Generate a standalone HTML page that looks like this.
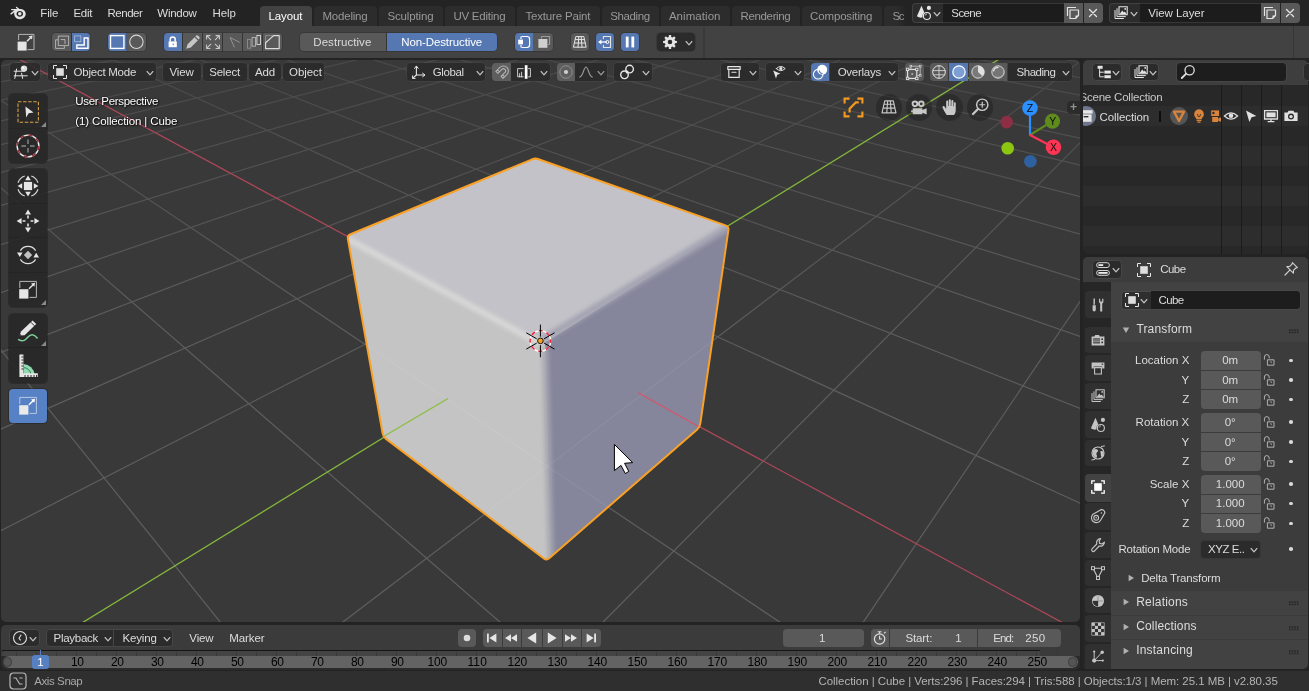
<!DOCTYPE html>
<html><head><meta charset="utf-8"><title>Blender</title>
<style>
html,body{margin:0;padding:0}
body{width:1309px;height:691px;overflow:hidden;position:relative;background:#232323;font-family:"Liberation Sans",sans-serif;font-size:11.5px;color:#e6e6e6}
.t{position:absolute;white-space:pre;line-height:14px;display:block}
.r{position:absolute;box-sizing:border-box}
.i{position:absolute;overflow:visible}
.sh{text-shadow:0 1px 2px rgba(0,0,0,.9),0 0 2px rgba(0,0,0,.8)}
</style></head><body>
<svg class="i" style="left:0;top:58px" width="1084" height="567" viewBox="0 58 1084 567">
<defs>
<clipPath id="vpc"><rect x="1" y="60" width="1079" height="562" rx="5" ry="5"/></clipPath>
<clipPath id="cubec"><path d="M532.1 159.3 Q535.3 158.0 538.6 159.2 L725.6 225.4 Q728.9 226.6 728.4 230.1 L700.3 423.7 Q699.8 427.2 697.2 429.5 L549.2 558.3 Q546.6 560.6 543.8 558.5 L386.0 438.9 Q383.2 436.8 382.6 433.4 L347.9 239.0 Q347.3 235.6 350.5 234.3 Z"/></clipPath>
<linearGradient id="fade" x1="0" y1="60" x2="0" y2="622" gradientUnits="userSpaceOnUse">
<stop offset="0" stop-color="#fff" stop-opacity=".42"/><stop offset=".18" stop-color="#fff" stop-opacity=".62"/><stop offset=".45" stop-color="#fff" stop-opacity=".9"/><stop offset="1" stop-color="#fff" stop-opacity="1"/></linearGradient>
<mask id="fm" maskUnits="userSpaceOnUse" x="0" y="58" width="1084" height="567"><rect x="0" y="58" width="1084" height="567" fill="url(#fade)"/></mask>
<filter id="b3" x="-10%" y="-10%" width="120%" height="120%"><feGaussianBlur stdDeviation="3"/></filter>
<filter id="b2" x="-10%" y="-10%" width="120%" height="120%"><feGaussianBlur stdDeviation="2.2"/></filter>
<filter id="b1" x="-10%" y="-10%" width="120%" height="120%"><feGaussianBlur stdDeviation="1.2"/></filter>
</defs>
<rect x="1" y="60" width="1079" height="562" rx="5" ry="5" fill="#393939"/>
<g clip-path="url(#vpc)">
<g stroke="#606060" stroke-width="1.2" mask="url(#fm)" fill="none">
<line x1="-6129.8" y1="479.9" x2="525.2" y2="-113.3"/>
<line x1="-6129.8" y1="479.9" x2="-91168.5" y2="10524.8"/>
<line x1="-6877.6" y1="568.2" x2="538.6" y2="-112.2"/>
<line x1="-5292.8" y1="405.3" x2="-87488.0" y2="10524.8"/>
<line x1="-7851.4" y1="683.3" x2="552.3" y2="-111.1"/>
<line x1="-4623.0" y1="345.6" x2="-83807.6" y2="10524.8"/>
<line x1="-9172.1" y1="839.3" x2="566.4" y2="-110.0"/>
<line x1="-4074.8" y1="296.7" x2="-80127.1" y2="10524.8"/>
<line x1="-11065.4" y1="1062.9" x2="580.9" y2="-108.8"/>
<line x1="-3617.9" y1="256.0" x2="-76446.7" y2="10524.8"/>
<line x1="-14006.4" y1="1410.3" x2="595.8" y2="-107.5"/>
<line x1="-3231.2" y1="221.5" x2="-72766.2" y2="10524.8"/>
<line x1="-19197.4" y1="2023.5" x2="611.2" y2="-106.3"/>
<line x1="-2899.7" y1="192.0" x2="-69085.8" y2="10524.8"/>
<line x1="-30820.7" y1="3396.4" x2="627.1" y2="-105.0"/>
<line x1="-2612.4" y1="166.4" x2="-65405.3" y2="10524.8"/>
<line x1="-80299.8" y1="9241.0" x2="643.4" y2="-103.6"/>
<line x1="-2360.9" y1="143.9" x2="-61724.9" y2="10524.8"/>
<line x1="-87996.8" y1="10524.8" x2="660.2" y2="-102.2"/>
<line x1="-2139.1" y1="124.2" x2="-58044.4" y2="10524.8"/>
<line x1="-84573.2" y1="10524.8" x2="677.6" y2="-100.8"/>
<line x1="-1941.8" y1="106.6" x2="-54364.0" y2="10524.8"/>
<line x1="-81149.6" y1="10524.8" x2="695.5" y2="-99.3"/>
<line x1="-1765.3" y1="90.8" x2="-50683.5" y2="10524.8"/>
<line x1="-77726.0" y1="10524.8" x2="714.1" y2="-97.8"/>
<line x1="-1606.4" y1="76.7" x2="-47003.1" y2="10524.8"/>
<line x1="-74302.4" y1="10524.8" x2="733.2" y2="-96.2"/>
<line x1="-1462.7" y1="63.9" x2="-43322.6" y2="10524.8"/>
<line x1="-70878.8" y1="10524.8" x2="753.0" y2="-94.6"/>
<line x1="-1332.0" y1="52.2" x2="-39642.1" y2="10524.8"/>
<line x1="-67455.3" y1="10524.8" x2="773.5" y2="-92.9"/>
<line x1="-1212.7" y1="41.6" x2="-35961.7" y2="10524.8"/>
<line x1="-64031.7" y1="10524.8" x2="794.6" y2="-91.1"/>
<line x1="-1103.3" y1="31.8" x2="-32281.2" y2="10524.8"/>
<line x1="-60608.1" y1="10524.8" x2="816.6" y2="-89.3"/>
<line x1="-1002.7" y1="22.9" x2="-28600.8" y2="10524.8"/>
<line x1="-57184.5" y1="10524.8" x2="839.3" y2="-87.5"/>
<line x1="-909.8" y1="14.6" x2="-24920.3" y2="10524.8"/>
<line x1="-53760.9" y1="10524.8" x2="862.9" y2="-85.5"/>
<line x1="-823.7" y1="6.9" x2="-21239.9" y2="10524.8"/>
<line x1="-50337.3" y1="10524.8" x2="887.4" y2="-83.5"/>
<line x1="-743.9" y1="-0.2" x2="-17559.4" y2="10524.8"/>
<line x1="-46913.8" y1="10524.8" x2="912.8" y2="-81.4"/>
<line x1="-669.5" y1="-6.8" x2="-13879.0" y2="10524.8"/>
<line x1="-43490.2" y1="10524.8" x2="939.2" y2="-79.2"/>
<line x1="-600.1" y1="-13.0" x2="-10198.5" y2="10524.8"/>
<line x1="-40066.6" y1="10524.8" x2="966.6" y2="-77.0"/>
<line x1="-535.1" y1="-18.8" x2="-6518.1" y2="10524.8"/>
<line x1="-36643.0" y1="10524.8" x2="995.2" y2="-74.6"/>
<line x1="-474.2" y1="-24.2" x2="-2837.6" y2="10524.8"/>
<line x1="-33219.4" y1="10524.8" x2="1024.9" y2="-72.2"/>
<line x1="-417.0" y1="-29.3" x2="842.8" y2="10524.8"/>
<line x1="-29795.8" y1="10524.8" x2="1055.9" y2="-69.6"/>
<line x1="-363.2" y1="-34.1" x2="4523.3" y2="10524.8"/>
<line x1="-26372.3" y1="10524.8" x2="1088.3" y2="-67.0"/>
<line x1="-312.4" y1="-38.7" x2="8203.7" y2="10524.8"/>
<line x1="-22948.7" y1="10524.8" x2="1122.1" y2="-64.2"/>
<line x1="-264.5" y1="-42.9" x2="11884.2" y2="10524.8"/>
<line x1="-19525.1" y1="10524.8" x2="1157.4" y2="-61.3"/>
<line x1="-219.2" y1="-47.0" x2="15564.7" y2="10524.8"/>
<line x1="-12677.9" y1="10524.8" x2="1233.1" y2="-55.0"/>
<line x1="-135.4" y1="-54.4" x2="22925.6" y2="10524.8"/>
<line x1="-9254.4" y1="10524.8" x2="1273.7" y2="-51.7"/>
<line x1="-96.7" y1="-57.9" x2="26606.0" y2="10524.8"/>
<line x1="-5830.8" y1="10524.8" x2="1316.4" y2="-48.2"/>
<line x1="-59.9" y1="-61.2" x2="30286.5" y2="10524.8"/>
<line x1="-2407.2" y1="10524.8" x2="1361.2" y2="-44.5"/>
<line x1="-24.8" y1="-64.3" x2="33966.9" y2="10524.8"/>
<line x1="1016.4" y1="10524.8" x2="1408.4" y2="-40.6"/>
<line x1="8.7" y1="-67.3" x2="37647.4" y2="10524.8"/>
<line x1="4440.0" y1="10524.8" x2="1458.1" y2="-36.5"/>
<line x1="40.6" y1="-70.1" x2="41327.8" y2="10524.8"/>
<line x1="7863.6" y1="10524.8" x2="1510.5" y2="-32.2"/>
<line x1="71.1" y1="-72.9" x2="45008.3" y2="10524.8"/>
<line x1="11287.1" y1="10524.8" x2="1566.0" y2="-27.6"/>
<line x1="100.3" y1="-75.5" x2="48688.7" y2="10524.8"/>
<line x1="14710.7" y1="10524.8" x2="1624.7" y2="-22.8"/>
<line x1="128.2" y1="-78.0" x2="52369.2" y2="10524.8"/>
<line x1="18134.3" y1="10524.8" x2="1686.9" y2="-17.6"/>
<line x1="155.0" y1="-80.3" x2="56049.6" y2="10524.8"/>
<line x1="21557.9" y1="10524.8" x2="1753.0" y2="-12.2"/>
<line x1="180.7" y1="-82.6" x2="59730.1" y2="10524.8"/>
<line x1="24981.5" y1="10524.8" x2="1823.4" y2="-6.4"/>
<line x1="205.4" y1="-84.8" x2="63410.5" y2="10524.8"/>
<line x1="28405.1" y1="10524.8" x2="1898.4" y2="-0.2"/>
<line x1="229.0" y1="-86.9" x2="67091.0" y2="10524.8"/>
<line x1="31828.6" y1="10524.8" x2="1978.6" y2="6.4"/>
<line x1="251.8" y1="-89.0" x2="70771.5" y2="10524.8"/>
<line x1="35252.2" y1="10524.8" x2="2064.5" y2="13.5"/>
<line x1="273.7" y1="-90.9" x2="74451.9" y2="10524.8"/>
<line x1="38675.8" y1="10524.8" x2="2156.8" y2="21.1"/>
<line x1="294.9" y1="-92.8" x2="78132.4" y2="10524.8"/>
<line x1="42099.4" y1="10524.8" x2="2256.1" y2="29.2"/>
<line x1="315.2" y1="-94.6" x2="81812.8" y2="10524.8"/>
<line x1="45523.0" y1="10524.8" x2="2363.3" y2="38.1"/>
<line x1="334.8" y1="-96.4" x2="85493.3" y2="10524.8"/>
<line x1="48946.6" y1="10524.8" x2="2479.4" y2="47.6"/>
<line x1="353.7" y1="-98.1" x2="37095.2" y2="4296.2"/>
<line x1="52370.1" y1="10524.8" x2="2605.5" y2="58.0"/>
<line x1="372.0" y1="-99.7" x2="20879.9" y2="2256.3"/>
<line x1="55793.7" y1="10524.8" x2="2743.1" y2="69.4"/>
<line x1="389.7" y1="-101.3" x2="14797.7" y2="1491.1"/>
<line x1="59217.3" y1="10524.8" x2="2893.6" y2="81.8"/>
<line x1="406.7" y1="-102.8" x2="11611.5" y2="1090.3"/>
<line x1="62640.9" y1="10524.8" x2="3059.2" y2="95.4"/>
<line x1="423.3" y1="-104.3" x2="9650.6" y2="843.6"/>
<line x1="66064.5" y1="10524.8" x2="3242.1" y2="110.5"/>
<line x1="439.2" y1="-105.7" x2="8322.2" y2="676.5"/>
<line x1="69488.0" y1="10524.8" x2="3445.1" y2="127.2"/>
<line x1="454.7" y1="-107.1" x2="7362.8" y2="555.8"/>
<line x1="72911.6" y1="10524.8" x2="3671.9" y2="145.9"/>
<line x1="469.7" y1="-108.4" x2="6637.4" y2="464.5"/>
<line x1="76335.2" y1="10524.8" x2="3926.8" y2="166.9"/>
<line x1="484.2" y1="-109.7" x2="6069.6" y2="393.1"/>
<line x1="79758.8" y1="10524.8" x2="4215.5" y2="190.7"/>
<line x1="498.3" y1="-110.9" x2="5613.2" y2="335.7"/>
<line x1="83182.4" y1="10524.8" x2="4545.0" y2="217.8"/>
<line x1="512.0" y1="-112.2" x2="5238.3" y2="288.5"/>
<line x1="86606.0" y1="10524.8" x2="4924.9" y2="249.1"/>
<line x1="525.2" y1="-113.3" x2="4924.9" y2="249.1"/>
</g>
<line x1="-100.0" y1="-5.2" x2="1200.0" y2="696.9" stroke="#ad475a" stroke-width="1.25"/>
<line x1="-100.0" y1="734.8" x2="1200.0" y2="-64.3" stroke="#84b73c" stroke-width="1.3"/>
<g clip-path="url(#cubec)">
<polygon points="535.3,158.0 728.9,226.6 699.8,427.2 546.6,560.6 383.2,436.8 347.3,235.6" fill="#c3c3c3"/>
<polygon points="535.3,158.0 728.9,226.6 540.6,341.0 347.3,235.6" fill="#c3c2c8"/>
<polygon points="347.3,235.6 540.6,341.0 546.6,560.6 383.2,436.8" fill="#c4c4c4"/>
<polygon points="540.6,341.0 545.1,342.5 551.1,557.1 546.6,560.6" fill="#c4c4c4"/>
<polygon points="545.1,342.5 728.9,226.6 699.8,427.2 546.6,560.6 551.1,557.1" fill="#85869b"/>
<g filter="url(#b2)">
<line x1="540.6" y1="341.0" x2="728.9" y2="226.6" stroke="#a3a3b2" stroke-width="7"/>
<line x1="545.1" y1="348.5" x2="551.1" y2="563.1" stroke="#a5a5b0" stroke-width="6"/>
</g>
<g filter="url(#b2)">
<line x1="347.3" y1="238.6" x2="540.6" y2="344.0" stroke="#dadada" stroke-width="6" stroke-opacity=".9"/>
</g>
</g>
<clipPath id="sidec"><polygon points="347.3,235.6 540.6,341.0 728.9,226.6 699.8,427.2 546.6,560.6 383.2,436.8"/></clipPath>
<g clip-path="url(#sidec)" stroke="#fff" stroke-opacity=".09" stroke-width="1" fill="none">
<line x1="-816.6" y1="1503.9" x2="947.1" y2="162.5"/>
<line x1="111.2" y1="174.3" x2="1845.6" y2="1335.9"/>
</g>
<line x1="383.2" y1="436.8" x2="448.0" y2="398.5" stroke="#8cbd3f" stroke-width="1.3"/>
<line x1="638.3" y1="392.7" x2="699.8" y2="427.2" stroke="#d9536b" stroke-width="1.3"/>
<path d="M532.1 159.3 Q535.3 158.0 538.6 159.2 L725.6 225.4 Q728.9 226.6 728.4 230.1 L700.3 423.7 Q699.8 427.2 697.2 429.5 L549.2 558.3 Q546.6 560.6 543.8 558.5 L386.0 438.9 Q383.2 436.8 382.6 433.4 L347.9 239.0 Q347.3 235.6 350.5 234.3 Z" fill="none" stroke="#f9a126" stroke-width="2" stroke-linejoin="round"/>
<g transform="translate(540.4 340.9)">
<circle r="10.3" fill="none" stroke="#fff" stroke-width="1.3"/>
<circle r="10.3" fill="none" stroke="#f0243a" stroke-width="1.5" stroke-dasharray="4.05 4.04" stroke-dashoffset="2"/>
<line x1="0.0" y1="-4.3" x2="0.0" y2="-16.3" stroke="#000" stroke-width="1"/>
<line x1="3.7" y1="-2.1" x2="14.1" y2="-8.1" stroke="#000" stroke-width="1"/>
<line x1="-3.7" y1="-2.1" x2="-14.1" y2="-8.1" stroke="#000" stroke-width="1"/>
<line x1="-3.7" y1="2.2" x2="-14.1" y2="8.2" stroke="#000" stroke-width="1"/>
<line x1="-0.0" y1="4.3" x2="-0.0" y2="16.3" stroke="#000" stroke-width="1"/>
<line x1="3.7" y1="2.2" x2="14.1" y2="8.2" stroke="#000" stroke-width="1"/>
<circle r="2.8" fill="#f9a126" stroke="#1a1a1a" stroke-width="1"/>
</g>
</g>
<path transform="translate(614.4 444.4)" d="M0 0 L0 26.2 L6.6 21 L10.9 29.2 L14.4 27 L10.2 18.9 L18.3 18.2 Z" fill="#fff" stroke="#000" stroke-width="1" stroke-linejoin="miter"/>
</svg>
<div id="ui" style="position:absolute;left:0;top:0;width:1309px;height:691px;will-change:transform">
<div class="r" style="left:0.0px;top:0.0px;width:1309.0px;height:26.0px;background:#232323;"></div>
<svg class="i" style="left:9.6px;top:4.9px;" width="16" height="16" viewBox="0 0 16 14"><path d="M9.6 3.0 L6.9 .9 C6.3 .4 5.4 1.4 6.1 1.9 L7.4 2.9 L1.7 2.9 C.8 2.9 .8 4.2 1.7 4.2 L4.4 4.2 L.6 7.2 C-.1 7.8 .7 8.9 1.4 8.4 L4.3 6.2 C3.5 9.8 6 13.2 9.8 13.2 C13.1 13.2 15.7 10.8 15.7 7.7 C15.7 4.6 12.8 2.8 9.6 3.0 Z M9.8 5.0 C11.6 5.0 13.1 6.2 13.1 7.8 C13.1 9.4 11.6 10.7 9.8 10.7 C8 10.7 6.5 9.4 6.5 7.8 C6.5 6.2 8 5.0 9.8 5.0 Z" fill="#e4e4e4" fill-rule="evenodd"/><circle cx="9.8" cy="7.8" r="1.8" fill="#e4e4e4"/></svg>
<span class="t" style="left:40.3px;top:6.0px;font-size:11.50px;color:#dcdcdc;letter-spacing:-0.16px;">File</span>
<span class="t" style="left:73.5px;top:6.0px;font-size:11.50px;color:#dcdcdc;letter-spacing:-0.33px;">Edit</span>
<span class="t" style="left:107.4px;top:6.0px;font-size:11.50px;color:#dcdcdc;letter-spacing:-0.45px;">Render</span>
<span class="t" style="left:157.3px;top:6.0px;font-size:11.50px;color:#dcdcdc;letter-spacing:-0.27px;">Window</span>
<span class="t" style="left:212.5px;top:6.0px;font-size:11.50px;color:#dcdcdc;letter-spacing:-0.11px;">Help</span>
<div class="r" style="left:260.2px;top:6.0px;width:51.9px;height:20.0px;background:#424242;border-radius:4px 4px 0 0;"></div>
<span class="t" style="left:268.4px;top:9.2px;font-size:11.50px;color:#ffffff;letter-spacing:-0.10px;">Layout</span>
<div class="r" style="left:314.0px;top:6.0px;width:62.9px;height:20.0px;background:#2c2c2c;border-radius:4px 4px 0 0;"></div>
<span class="t" style="left:322.5px;top:9.2px;font-size:11.50px;color:#989898;letter-spacing:-0.22px;">Modeling</span>
<div class="r" style="left:378.6px;top:6.0px;width:64.8px;height:20.0px;background:#2c2c2c;border-radius:4px 4px 0 0;"></div>
<span class="t" style="left:387.5px;top:9.2px;font-size:11.50px;color:#989898;letter-spacing:-0.15px;">Sculpting</span>
<div class="r" style="left:444.9px;top:6.0px;width:70.6px;height:20.0px;background:#2c2c2c;border-radius:4px 4px 0 0;"></div>
<span class="t" style="left:453.4px;top:9.2px;font-size:11.50px;color:#989898;letter-spacing:-0.23px;">UV Editing</span>
<div class="r" style="left:517.2px;top:6.0px;width:82.8px;height:20.0px;background:#2c2c2c;border-radius:4px 4px 0 0;"></div>
<span class="t" style="left:525.5px;top:9.2px;font-size:11.50px;color:#989898;letter-spacing:-0.18px;">Texture Paint</span>
<div class="r" style="left:601.8px;top:6.0px;width:57.5px;height:20.0px;background:#2c2c2c;border-radius:4px 4px 0 0;"></div>
<span class="t" style="left:610.2px;top:9.2px;font-size:11.50px;color:#989898;letter-spacing:-0.39px;">Shading</span>
<div class="r" style="left:661.1px;top:6.0px;width:68.8px;height:20.0px;background:#2c2c2c;border-radius:4px 4px 0 0;"></div>
<span class="t" style="left:668.9px;top:9.2px;font-size:11.50px;color:#989898;letter-spacing:0.06px;">Animation</span>
<div class="r" style="left:731.9px;top:6.0px;width:68.1px;height:20.0px;background:#2c2c2c;border-radius:4px 4px 0 0;"></div>
<span class="t" style="left:740.5px;top:9.2px;font-size:11.50px;color:#989898;letter-spacing:-0.35px;">Rendering</span>
<div class="r" style="left:802.3px;top:6.0px;width:79.6px;height:20.0px;background:#2c2c2c;border-radius:4px 4px 0 0;"></div>
<span class="t" style="left:810.1px;top:9.2px;font-size:11.50px;color:#989898;letter-spacing:-0.16px;">Compositing</span>
<div class="r" style="left:884.2px;top:6.0px;width:21.8px;height:20.0px;background:linear-gradient(90deg,#2c2c2c 60%,rgba(44,44,44,0));border-radius:4px 0 0 0;"></div>
<span class="t" style="left:892.5px;top:9.2px;font-size:11.50px;color:#989898;letter-spacing:-1.31px;width:11.5px;overflow:hidden;">Sc</span>
<div class="r" style="left:912.0px;top:3.0px;width:31.4px;height:20.0px;background:#2c2c2c;border-radius:4px 0 0 4px;border:1px solid #414141;border-right:none;"></div>
<svg class="i" style="left:916.0px;top:5.0px;" width="16" height="16" viewBox="0 0 16 16"><path d="M5.5 .8 L9.6 10.6 Q5.4 14.4 .9 11.3 Z" fill="currentColor" /><circle cx="10.9" cy="11" r="4.4" fill="#2c2c2c"/><circle cx="10.9" cy="11" r="3.5" fill="none" stroke="currentColor" stroke-width="1.1"/><circle cx="12.9" cy="2.9" r="2.1" fill="currentColor"/><path d="M9.2 10.2 A2 2 0 0 1 10.6 8.9" fill="none" stroke="currentColor" stroke-width="0.8" stroke-linecap="round" stroke-linejoin="round" /></svg>
<svg class="i" style="left:931.4px;top:9.8px" width="12" height="8" viewBox="-6 -4 12 8"><path d="M-2.9 -1.5 L0 1.8 L2.9 -1.5" fill="none" stroke="#c2c2c2" stroke-width="1.15" stroke-linecap="round" stroke-linejoin="round"/></svg>
<div class="r" style="left:943.4px;top:3.0px;width:120.2px;height:20.0px;background:#1c1c1c;border-radius:0px;border-top:1px solid #363636;border-bottom:1px solid #363636;"></div>
<span class="t" style="left:951.3px;top:5.8px;font-size:11.50px;color:#dcdcdc;letter-spacing:-0.58px;">Scene</span>
<div class="r" style="left:1063.6px;top:3.0px;width:19.4px;height:20.0px;background:#595959;border-radius:0px;"></div>
<svg class="i" style="left:1065.3px;top:5.0px;" width="16" height="16" viewBox="0 0 16 16"><path d="M2.5 10.5 V2.5 H10.5" fill="none" stroke="currentColor" stroke-width="1.2" stroke-linecap="round" stroke-linejoin="round" /><path d="M5 5 H13.5 V10.5 L10.5 13.5 H5 Z" fill="#595959" stroke="currentColor" stroke-width="1.2" stroke-linejoin="round"/><path d="M13.5 10.5 H10.5 V13.5 Z" fill="currentColor" /></svg>
<div class="r" style="left:1083.8px;top:3.0px;width:19.2px;height:20.0px;background:#595959;border-radius:0 4px 4px 0;"></div>
<svg class="i" style="left:1085.4px;top:5.0px;" width="16" height="16" viewBox="0 0 16 16"><path d="M4.5 4.5 L11.5 11.5 M11.5 4.5 L4.5 11.5" fill="none" stroke="currentColor" stroke-width="1.3" stroke-linecap="round" stroke-linejoin="round" /></svg>
<div class="r" style="left:1109.0px;top:3.0px;width:31.4px;height:20.0px;background:#2c2c2c;border-radius:4px 0 0 4px;border:1px solid #414141;border-right:none;"></div>
<svg class="i" style="left:1113.0px;top:5.0px;" width="16" height="16" viewBox="0 0 16 16"><path d="M2 5.5 V13.5 H10.5 M4 3.7 V11.6 H12.4" fill="none" stroke="currentColor" stroke-width="1" stroke-linecap="round" stroke-linejoin="round" /><path d="M6 1.8 H14.2 V9.8 H6 Z" fill="none" stroke="currentColor" stroke-width="1.1"/><path d="M6.6 9.2 L9.2 5.4 L10.8 7.6 L11.8 6.4 L13.6 9.2 Z" fill="currentColor" /><circle cx="12.2" cy="3.9" r=".9" fill="currentColor"/></svg>
<svg class="i" style="left:1128.4px;top:9.8px" width="12" height="8" viewBox="-6 -4 12 8"><path d="M-2.9 -1.5 L0 1.8 L2.9 -1.5" fill="none" stroke="#c2c2c2" stroke-width="1.15" stroke-linecap="round" stroke-linejoin="round"/></svg>
<div class="r" style="left:1140.4px;top:3.0px;width:120.2px;height:20.0px;background:#1c1c1c;border-radius:0px;border-top:1px solid #363636;border-bottom:1px solid #363636;"></div>
<span class="t" style="left:1148.3px;top:5.8px;font-size:11.50px;color:#dcdcdc;letter-spacing:-0.05px;">View Layer</span>
<div class="r" style="left:1260.6px;top:3.0px;width:19.4px;height:20.0px;background:#595959;border-radius:0px;"></div>
<svg class="i" style="left:1262.3px;top:5.0px;" width="16" height="16" viewBox="0 0 16 16"><path d="M2.5 10.5 V2.5 H10.5" fill="none" stroke="currentColor" stroke-width="1.2" stroke-linecap="round" stroke-linejoin="round" /><path d="M5 5 H13.5 V10.5 L10.5 13.5 H5 Z" fill="#595959" stroke="currentColor" stroke-width="1.2" stroke-linejoin="round"/><path d="M13.5 10.5 H10.5 V13.5 Z" fill="currentColor" /></svg>
<div class="r" style="left:1280.8px;top:3.0px;width:19.2px;height:20.0px;background:#595959;border-radius:0 4px 4px 0;"></div>
<svg class="i" style="left:1282.4px;top:5.0px;" width="16" height="16" viewBox="0 0 16 16"><path d="M4.5 4.5 L11.5 11.5 M11.5 4.5 L4.5 11.5" fill="none" stroke="currentColor" stroke-width="1.3" stroke-linecap="round" stroke-linejoin="round" /></svg>
<div class="r" style="left:0.0px;top:26.0px;width:1309.0px;height:32.0px;background:#424242;"></div>
<div class="r" style="left:703.2px;top:27.0px;width:1.6px;height:31.0px;background:#3a3a3a;"></div>
<div class="r" style="left:1292.5px;top:26.0px;width:1.0px;height:32.0px;background:#363636;"></div>
<svg class="i" style="left:16.8px;top:33.2px;" width="18" height="18" viewBox="0 0 18 18"><path d="M1.6 7 V1.4 H17 V16.6 H10.4" fill="none" stroke="#b4b4b4" stroke-width="1"/><rect x=".6" y="8.6" width="9" height="9" fill="#e6e6e6"/><path d="M10 8.2 L14 4.2" stroke="#e6e6e6" stroke-width="1.4" fill="none"/><path d="M15.6 2.6 L15 6.6 L11.6 3.2 Z" fill="#e6e6e6"/></svg>
<div class="r" style="left:52.0px;top:32.9px;width:18.8px;height:18.1px;background:#595959;border-radius:4px 0 0 4px;box-shadow:0 0 0 .7px rgba(45,45,45,.55);"></div>
<svg class="i" style="left:53.4px;top:34.0px;" width="16" height="16" viewBox="0 0 16 16"><path d="M4.6 5.8 H2.6 V14.4 H11.4 V12.6" fill="none" stroke="currentColor" stroke-width="1" stroke-linecap="round" stroke-linejoin="round" opacity=".62"/><path d="M5.7 2.1 H15.6 V11.6 H5.7 Z M8 5.6 H12 V9.6" fill="none" stroke="currentColor" stroke-width="1" stroke-linecap="round" stroke-linejoin="round" opacity=".62"/></svg>
<div class="r" style="left:71.5px;top:32.9px;width:18.5px;height:18.1px;background:#5578b2;border-radius:0 4px 4px 0;box-shadow:0 0 0 .7px rgba(45,45,45,.55);"></div>
<svg class="i" style="left:72.8px;top:34.0px;" width="16" height="16" viewBox="0 0 16 16"><rect x="1.6" y="1.9" width="6.2" height="5.8" fill="none" stroke="#d6e0f2" stroke-width=".9" opacity=".6"/><path d="M11.2 4 H15 V14.3 H3.8 V11 H11.2 Z" fill="none" stroke="#fff" stroke-width="1.4" stroke-linejoin="miter"/></svg>
<div class="r" style="left:107.8px;top:32.9px;width:18.8px;height:18.1px;background:#5578b2;border-radius:4px 0 0 4px;box-shadow:0 0 0 .7px rgba(45,45,45,.55);"></div>
<svg class="i" style="left:109.2px;top:34.0px;" width="16" height="16" viewBox="0 0 16 16"><rect x="1.5" y="1.6" width="13.4" height="12.8" fill="none" stroke="#fff" stroke-width="1.4"/></svg>
<div class="r" style="left:127.3px;top:32.9px;width:18.7px;height:18.1px;background:#595959;border-radius:0 4px 4px 0;box-shadow:0 0 0 .7px rgba(45,45,45,.55);"></div>
<svg class="i" style="left:128.7px;top:34.0px;" width="16" height="16" viewBox="0 0 16 16"><circle cx="7.4" cy="7.8" r="6.7" fill="none" stroke="#d6d6d6" stroke-width="1.1"/></svg>
<div class="r" style="left:163.9px;top:32.9px;width:18.3px;height:18.1px;background:#5578b2;border-radius:4px 0 0 4px;box-shadow:0 0 0 .7px rgba(45,45,45,.55);"></div>
<svg class="i" style="left:165.1px;top:34.0px;" width="16" height="16" viewBox="0 0 16 16"><path d="M5.2 7.6 V5.4 A2.5 2.5 0 0 1 10.2 5.4 V7.6" fill="none" stroke="#fff" stroke-width="1.5"/><path d="M3.6 7.4 H11.8 V13.2 H3.6 Z" fill="#fff"/><path d="M7 9.8 H8.8 V11.4 Z" fill="#5578b2"/></svg>
<div class="r" style="left:182.9px;top:32.9px;width:19.4px;height:18.1px;background:#595959;border-radius:0px;box-shadow:0 0 0 .7px rgba(45,45,45,.55);"></div>
<svg class="i" style="left:184.6px;top:34.0px;" width="16" height="16" viewBox="0 0 16 16"><path d="M1.2 14.8 L2.6 10.2 L9.6 3.2 L12.8 6.4 L5.8 13.4 Z M10.4 2.4 L11.2 1.6 Q12.2 .8 13.2 1.8 L14.2 2.8 Q15.2 3.8 14.4 4.8 L13.6 5.6 Z" fill="#c6c6c6"/></svg>
<div class="r" style="left:203.0px;top:32.9px;width:19.2px;height:18.1px;background:#595959;border-radius:0px;box-shadow:0 0 0 .7px rgba(45,45,45,.55);"></div>
<svg class="i" style="left:204.6px;top:34.0px;" width="16" height="16" viewBox="0 0 16 16"><path d="M1.6 5 V1.6 H5 M1.9 1.9 L5.8 5.8 M11 1.6 H14.4 V5 M14.1 1.9 L10.2 5.8 M1.6 11 V14.4 H5 M1.9 14.1 L5.8 10.2 M14.4 11 V14.4 H11 M14.1 14.1 L10.2 10.2" fill="none" stroke="currentColor" stroke-width="1.05" stroke-linecap="round" stroke-linejoin="round" opacity=".8"/></svg>
<div class="r" style="left:222.9px;top:32.9px;width:19.4px;height:18.1px;background:#595959;border-radius:0px;box-shadow:0 0 0 .7px rgba(45,45,45,.55);"></div>
<svg class="i" style="left:224.6px;top:34.0px;" width="16" height="16" viewBox="0 0 16 16"><path d="M9.2 13 L5.2 3.6 L14.4 8.2" fill="none" stroke="currentColor" stroke-width="1" stroke-linecap="round" stroke-linejoin="round" opacity=".4"/></svg>
<div class="r" style="left:243.0px;top:32.9px;width:19.4px;height:18.1px;background:#595959;border-radius:0px;box-shadow:0 0 0 .7px rgba(45,45,45,.55);"></div>
<svg class="i" style="left:244.7px;top:34.0px;" width="16" height="16" viewBox="0 0 16 16"><rect x="2.5" y="5.4" width="3.3" height="8.8" fill="none" stroke="#8e8e8e" stroke-width=".9"/><rect x="7.1" y="3.4" width="3.4" height="8.8" fill="none" stroke="#b8b8b8" stroke-width=".9"/><rect x="11.9" y="1.5" width="3.6" height="9" fill="none" stroke="#dadada" stroke-width=".9"/></svg>
<div class="r" style="left:263.1px;top:32.9px;width:18.6px;height:18.1px;background:#595959;border-radius:0 4px 4px 0;box-shadow:0 0 0 .7px rgba(45,45,45,.55);"></div>
<svg class="i" style="left:264.4px;top:34.0px;" width="16" height="16" viewBox="0 0 16 16"><path d="M1.6 8.8 V14.6 H15.2 V1.6 H9.6 Z" fill="none" stroke="currentColor" stroke-width="1.15" stroke-linecap="round" stroke-linejoin="round" opacity=".92"/><path d="M1.6 8.8 V1.6 H9.6" fill="none" stroke="currentColor" stroke-width="0.9" stroke-linecap="round" stroke-linejoin="round" opacity=".4"/></svg>
<div class="r" style="left:300.0px;top:32.9px;width:86.2px;height:18.1px;background:#595959;border-radius:4px 0 0 4px;box-shadow:0 0 0 .7px rgba(45,45,45,.55);"></div>
<span class="t" style="left:313.3px;top:35.3px;font-size:11.50px;color:#dcdcdc;letter-spacing:0.05px;">Destructive</span>
<div class="r" style="left:386.9px;top:32.9px;width:109.9px;height:18.1px;background:#5578b2;border-radius:0 4px 4px 0;box-shadow:0 0 0 .7px rgba(45,45,45,.55);"></div>
<span class="t" style="left:401.2px;top:35.3px;font-size:11.50px;color:#ffffff;letter-spacing:-0.10px;">Non-Destructive</span>
<div class="r" style="left:514.9px;top:32.9px;width:18.7px;height:18.1px;background:#5578b2;border-radius:4px 0 0 4px;box-shadow:0 0 0 .7px rgba(45,45,45,.55);"></div>
<svg class="i" style="left:516.2px;top:34.0px;" width="16" height="16" viewBox="0 0 16 16"><path d="M5.5 2.5 H11 Q13.6 2.5 13.6 5.2 V10.8 Q13.6 13.5 11 13.5 H5.5" fill="none" stroke="#fff" stroke-width="1.2"/><path d="M5 2.5 V5 M5 11 V13.5" stroke="#fff" stroke-width="1.2"/><rect x="2.2" y="5.6" width="4.8" height="4.8" fill="#fff"/></svg>
<div class="r" style="left:534.3px;top:32.9px;width:18.8px;height:18.1px;background:#595959;border-radius:0 4px 4px 0;box-shadow:0 0 0 .7px rgba(45,45,45,.55);"></div>
<svg class="i" style="left:535.7px;top:34.0px;" width="16" height="16" viewBox="0 0 16 16"><path d="M5.5 2.5 H13.5 V10.5" fill="none" stroke="#9c9c9c" stroke-width="1.2"/><rect x="2.4" y="5" width="9" height="8.8" fill="#cfcfcf"/><path d="M5.5 4.6 V2.5 M11.8 10.5 H13.5" stroke="#9c9c9c" stroke-width="1.2"/></svg>
<div class="r" style="left:571.3px;top:32.9px;width:17.9px;height:18.1px;background:#595959;border-radius:4px;box-shadow:0 0 0 .7px rgba(45,45,45,.55);"></div>
<svg class="i" style="left:572.2px;top:34.0px;" width="16" height="16" viewBox="0 0 16 16"><path d="M4.2 2.6 H11.8 L14.2 13.2 H1.8 Z M6.8 2.6 L6 13.2 M9.2 2.6 L10 13.2 M3.6 5.6 H12.4 M2.8 9 H13.2" fill="none" stroke="currentColor" stroke-width="1" stroke-linecap="round" stroke-linejoin="round" /></svg>
<div class="r" style="left:596.0px;top:32.9px;width:18.2px;height:18.1px;background:#5578b2;border-radius:4px;box-shadow:0 0 0 .7px rgba(45,45,45,.55);"></div>
<svg class="i" style="left:597.1px;top:34.0px;" width="16" height="16" viewBox="0 0 16 16"><path d="M6.4 4.6 V2.5 H13.5 V13.5 H6.4 V11.4" fill="none" stroke="currentColor" stroke-width="1.1" stroke-linecap="round" stroke-linejoin="round" stroke="#fff"/><path d="M1.8 8 H10" stroke="#fff" stroke-width="1.3" fill="none"/><path d="M1.2 8 L4.4 5.4 V10.6 Z" fill="#fff"/><circle cx="10.4" cy="8" r="1.5" fill="none" stroke="#fff" stroke-width="1"/></svg>
<div class="r" style="left:621.2px;top:32.9px;width:17.6px;height:18.1px;background:#5578b2;border-radius:4px;box-shadow:0 0 0 .7px rgba(45,45,45,.55);"></div>
<svg class="i" style="left:622.0px;top:34.0px;" width="16" height="16" viewBox="0 0 16 16"><rect x="3.8" y="2.6" width="2.8" height="10.8" fill="#fff"/><rect x="9.4" y="2.6" width="2.8" height="10.8" fill="#fff"/></svg>
<div class="r" style="left:657.0px;top:32.9px;width:37.7px;height:18.1px;background:#2b2b2b;border-radius:4px;box-shadow:0 0 0 .7px rgba(45,45,45,.55);"></div>
<svg class="i" style="left:661.8px;top:34.2px;" width="16" height="16" viewBox="0 0 16 16"><path d="M14.91 6.88 L14.91 9.12 L13.05 9.24 L12.45 10.70 L13.68 12.10 L12.10 13.68 L10.70 12.45 L9.24 13.05 L9.12 14.91 L6.88 14.91 L6.76 13.05 L5.30 12.45 L3.90 13.68 L2.32 12.10 L3.55 10.70 L2.95 9.24 L1.09 9.12 L1.09 6.88 L2.95 6.76 L3.55 5.30 L2.32 3.90 L3.90 2.32 L5.30 3.55 L6.76 2.95 L6.88 1.09 L9.12 1.09 L9.24 2.95 L10.70 3.55 L12.10 2.32 L13.68 3.90 L12.45 5.30 L13.05 6.76 Z M10.3 8 A2.3 2.3 0 1 0 5.7 8 A2.3 2.3 0 1 0 10.3 8 Z" fill="#e6e6e6" fill-rule="evenodd"/></svg>
<svg class="i" style="left:683.3px;top:39.2px" width="12" height="8" viewBox="-6 -4 12 8"><path d="M-2.9 -1.5 L0 1.8 L2.9 -1.5" fill="none" stroke="#c2c2c2" stroke-width="1.15" stroke-linecap="round" stroke-linejoin="round"/></svg>
<div class="r" style="left:9.9px;top:62.9px;width:30.1px;height:18.4px;background:rgba(40,40,40,.84);border-radius:4px;box-shadow:0 0 0 .7px rgba(85,85,85,.4);"></div>
<svg class="i" style="left:13.3px;top:64.0px;" width="16" height="16" viewBox="0 0 16 16"><path d="M1.2 7.2 H11.5 M1.2 11.8 H14.2 M3.6 5 L1.8 14.4 M8.6 9.2 L9.6 14.4" fill="none" stroke="currentColor" stroke-width="1" stroke-linecap="round" stroke-linejoin="round" /><circle cx="11" cy="4.6" r="3.2" fill="#dcdcdc"/><circle cx="10" cy="3.6" r="1.1" fill="#fff"/></svg>
<svg class="i" style="left:28.6px;top:69.2px" width="12" height="8" viewBox="-6 -4 12 8"><path d="M-2.9 -1.5 L0 1.8 L2.9 -1.5" fill="none" stroke="#c2c2c2" stroke-width="1.15" stroke-linecap="round" stroke-linejoin="round"/></svg>
<div class="r" style="left:48.1px;top:62.9px;width:108.1px;height:18.4px;background:rgba(40,40,40,.84);border-radius:4px;box-shadow:0 0 0 .7px rgba(85,85,85,.4);"></div>
<svg class="i" style="left:51.5px;top:64.0px;" width="16" height="16" viewBox="0 0 16 16"><path d="M1.5 4.6 V1.5 H4.6 M11.4 1.5 H14.5 V4.6 M14.5 11.4 V14.5 H11.4 M4.6 14.5 H1.5 V11.4" fill="none" stroke="currentColor" stroke-width="1" stroke-linecap="round" stroke-linejoin="round" /><rect x="4.2" y="4.2" width="7.6" height="7.6" fill="#dedede"/></svg>
<span class="t" style="left:73.6px;top:65.0px;font-size:11.50px;color:#dcdcdc;letter-spacing:-0.25px;">Object Mode</span>
<svg class="i" style="left:144.3px;top:69.2px" width="12" height="8" viewBox="-6 -4 12 8"><path d="M-2.9 -1.5 L0 1.8 L2.9 -1.5" fill="none" stroke="#c2c2c2" stroke-width="1.15" stroke-linecap="round" stroke-linejoin="round"/></svg>
<div class="r" style="left:162.6px;top:62.9px;width:38.3px;height:18.4px;background:rgba(40,40,40,.84);border-radius:4px;box-shadow:0 0 0 .7px rgba(85,85,85,.4);"></div>
<span class="t" style="left:169.4px;top:65.0px;font-size:11.50px;color:#dcdcdc;letter-spacing:-0.13px;">View</span>
<div class="r" style="left:203.0px;top:62.9px;width:43.5px;height:18.4px;background:rgba(40,40,40,.84);border-radius:4px;box-shadow:0 0 0 .7px rgba(85,85,85,.4);"></div>
<span class="t" style="left:209.2px;top:65.0px;font-size:11.50px;color:#dcdcdc;letter-spacing:-0.19px;">Select</span>
<div class="r" style="left:248.8px;top:62.9px;width:31.8px;height:18.4px;background:rgba(40,40,40,.84);border-radius:4px;box-shadow:0 0 0 .7px rgba(85,85,85,.4);"></div>
<span class="t" style="left:255.1px;top:65.0px;font-size:11.50px;color:#dcdcdc;letter-spacing:-0.25px;">Add</span>
<div class="r" style="left:282.8px;top:62.9px;width:41.4px;height:18.4px;background:rgba(40,40,40,.84);border-radius:4px;box-shadow:0 0 0 .7px rgba(85,85,85,.4);"></div>
<span class="t" style="left:289.1px;top:65.0px;font-size:11.50px;color:#dcdcdc;letter-spacing:-0.07px;">Object</span>
<div class="r" style="left:407.0px;top:62.9px;width:78.0px;height:18.4px;background:rgba(40,40,40,.84);border-radius:4px;box-shadow:0 0 0 .7px rgba(85,85,85,.4);"></div>
<svg class="i" style="left:411.0px;top:64.0px;" width="16" height="16" viewBox="0 0 16 16"><path d="M5.4 11 V2.4 M5.4 11 L13.6 11 M5.4 11 L1.8 14.2" fill="none" stroke="currentColor" stroke-width="1.1" stroke-linecap="round" stroke-linejoin="round" /><path d="M3.6 4.4 L5.4 2 L7.2 4.4 M11.6 9.2 L14 11 L11.6 12.8 M1.6 11.8 V14.4 H4.2" fill="none" stroke="currentColor" stroke-width="1" stroke-linecap="round" stroke-linejoin="round" /></svg>
<span class="t" style="left:432.8px;top:65.0px;font-size:11.50px;color:#dcdcdc;letter-spacing:-0.41px;">Global</span>
<svg class="i" style="left:473.5px;top:69.2px" width="12" height="8" viewBox="-6 -4 12 8"><path d="M-2.9 -1.5 L0 1.8 L2.9 -1.5" fill="none" stroke="#c2c2c2" stroke-width="1.15" stroke-linecap="round" stroke-linejoin="round"/></svg>
<div class="r" style="left:492.4px;top:62.9px;width:18.2px;height:18.4px;background:rgba(98,98,98,.92);border-radius:4px 0 0 4px;"></div>
<svg class="i" style="left:493.5px;top:64.1px;" width="16" height="16" viewBox="0 0 16 16" color="#b4b4b4"><g transform="translate(9.4 6.9) rotate(45)"><path d="M-5 5.6 V0 A5 5 0 0 1 5 0 V5.6 H2.2 V0 A2.2 2.2 0 0 0 -2.2 0 V5.6 Z M-5 3.4 H-2.2 M2.2 3.4 H5" fill="none" stroke="currentColor" stroke-width="1.05" stroke-linejoin="round"/></g></svg>
<div class="r" style="left:510.6px;top:62.9px;width:39.4px;height:18.4px;background:rgba(40,40,40,.84);border-radius:0 4px 4px 0;box-shadow:0 0 0 .7px rgba(85,85,85,.4);"></div>
<svg class="i" style="left:515.8px;top:64.0px;" width="16" height="16" viewBox="0 0 16 16"><path d="M7.2 4.6 H1.6 V12.8 H7.2 M3.6 12.8 V9.6 M5.6 12.8 V8.2" fill="none" stroke="currentColor" stroke-width="1" stroke-linecap="round" stroke-linejoin="round" opacity=".85"/><rect x="8.8" y="1.2" width="2.7" height="13.6" fill="#fff"/><path d="M12.6 4.6 H14.4 V12.8 H12.6" fill="none" stroke="currentColor" stroke-width="1" stroke-linecap="round" stroke-linejoin="round" opacity=".85"/></svg>
<svg class="i" style="left:538.4px;top:69.2px" width="12" height="8" viewBox="-6 -4 12 8"><path d="M-2.9 -1.5 L0 1.8 L2.9 -1.5" fill="none" stroke="#c2c2c2" stroke-width="1.15" stroke-linecap="round" stroke-linejoin="round"/></svg>
<div class="r" style="left:556.9px;top:62.9px;width:18.3px;height:18.4px;background:rgba(98,98,98,.92);border-radius:4px 0 0 4px;"></div>
<svg class="i" style="left:558.0px;top:64.1px;" width="16" height="16" viewBox="0 0 16 16" color="#cfcfcf"><circle cx="8" cy="8" r="6.2" fill="none" stroke="currentColor" stroke-width=".9" opacity=".45"/><circle cx="8" cy="8" r="2.1" fill="currentColor"/></svg>
<div class="r" style="left:575.2px;top:62.9px;width:32.3px;height:18.4px;background:rgba(40,40,40,.84);border-radius:0 4px 4px 0;box-shadow:0 0 0 .7px rgba(85,85,85,.4);"></div>
<svg class="i" style="left:578.3px;top:64.0px;" width="16" height="16" viewBox="0 0 16 16" color="#9a9a9a"><path d="M1.6 13 C5.2 13 5.6 3 8 3 C10.4 3 10.8 13 14.4 13" fill="none" stroke="currentColor" stroke-width="1.1" stroke-linecap="round" stroke-linejoin="round" /></svg>
<svg class="i" style="left:595.0px;top:69.2px" width="12" height="8" viewBox="-6 -4 12 8"><path d="M-2.9 -1.5 L0 1.8 L2.9 -1.5" fill="none" stroke="#9a9a9a" stroke-width="1.15" stroke-linecap="round" stroke-linejoin="round"/></svg>
<div class="r" style="left:614.1px;top:62.9px;width:38.1px;height:18.4px;background:rgba(40,40,40,.84);border-radius:4px;box-shadow:0 0 0 .7px rgba(85,85,85,.4);"></div>
<svg class="i" style="left:619.0px;top:64.0px;" width="16" height="16" viewBox="0 0 16 16"><circle cx="5.5" cy="10.8" r="3.8" fill="none" stroke="currentColor" stroke-width="1.4"/><circle cx="10.6" cy="5.1" r="3.8" fill="none" stroke="currentColor" stroke-width="1.4"/><circle cx="8.1" cy="8" r="1.5" fill="currentColor"/></svg>
<svg class="i" style="left:640.3px;top:69.2px" width="12" height="8" viewBox="-6 -4 12 8"><path d="M-2.9 -1.5 L0 1.8 L2.9 -1.5" fill="none" stroke="#c2c2c2" stroke-width="1.15" stroke-linecap="round" stroke-linejoin="round"/></svg>
<div class="r" style="left:721.2px;top:62.9px;width:38.2px;height:18.4px;background:rgba(40,40,40,.84);border-radius:4px;box-shadow:0 0 0 .7px rgba(85,85,85,.4);"></div>
<svg class="i" style="left:726.0px;top:64.0px;" width="16" height="16" viewBox="0 0 16 16"><path d="M1.8 2.6 H14.2 V5.4 H1.8 Z M2.8 5.6 V13.4 H13.2 V5.6 M6 8.2 H10" fill="none" stroke="currentColor" stroke-width="1.15" stroke-linecap="round" stroke-linejoin="round" /></svg>
<svg class="i" style="left:747.2px;top:69.2px" width="12" height="8" viewBox="-6 -4 12 8"><path d="M-2.9 -1.5 L0 1.8 L2.9 -1.5" fill="none" stroke="#c2c2c2" stroke-width="1.15" stroke-linecap="round" stroke-linejoin="round"/></svg>
<div class="r" style="left:765.9px;top:62.9px;width:38.1px;height:18.4px;background:rgba(40,40,40,.84);border-radius:4px;box-shadow:0 0 0 .7px rgba(85,85,85,.4);"></div>
<svg class="i" style="left:770.5px;top:64.0px;" width="16" height="16" viewBox="0 0 16 16"><path d="M5.4 4.6 Q9.6 .2 14.2 4.6 Q9.6 8.8 5.4 4.6 Z" fill="none" stroke="currentColor" stroke-width="1" stroke-linecap="round" stroke-linejoin="round" /><circle cx="9.8" cy="4.5" r="1.5" fill="currentColor"/><path d="M2.2 6.6 L9.4 9.8 L6.2 10.8 L5 14.4 Z" fill="currentColor" /></svg>
<svg class="i" style="left:792.4px;top:69.2px" width="12" height="8" viewBox="-6 -4 12 8"><path d="M-2.9 -1.5 L0 1.8 L2.9 -1.5" fill="none" stroke="#c2c2c2" stroke-width="1.15" stroke-linecap="round" stroke-linejoin="round"/></svg>
<div class="r" style="left:811.1px;top:62.9px;width:18.4px;height:18.4px;background:#5578b2;border-radius:4px 0 0 4px;"></div>
<svg class="i" style="left:812.3px;top:64.1px;" width="16" height="16" viewBox="0 0 16 16"><circle cx="6.2" cy="10.2" r="4.8" fill="none" stroke="#fff" stroke-width="1.1"/><circle cx="10.2" cy="5.8" r="5" fill="#fff"/><path d="M7.4 6.6 A2.8 2.8 0 0 0 10.6 9.4" fill="none" stroke="#5578b2" stroke-width="1.1"/></svg>
<div class="r" style="left:829.5px;top:62.9px;width:68.7px;height:18.4px;background:rgba(40,40,40,.84);border-radius:0 4px 4px 0;box-shadow:0 0 0 .7px rgba(85,85,85,.4);"></div>
<span class="t" style="left:837.7px;top:65.0px;font-size:11.50px;color:#dcdcdc;letter-spacing:-0.27px;">Overlays</span>
<svg class="i" style="left:886.1px;top:69.2px" width="12" height="8" viewBox="-6 -4 12 8"><path d="M-2.9 -1.5 L0 1.8 L2.9 -1.5" fill="none" stroke="#c2c2c2" stroke-width="1.15" stroke-linecap="round" stroke-linejoin="round"/></svg>
<div class="r" style="left:905.0px;top:62.9px;width:18.6px;height:18.4px;background:#595959;border-radius:4px;"></div>
<svg class="i" style="left:906.3px;top:64.1px;" width="16" height="16" viewBox="0 0 16 16"><path d="M4.8 5 V2.2 H14.2 V11.4 H11.4" fill="none" stroke="currentColor" stroke-width=".8" opacity=".8"/><rect x="1.6" y="5.4" width="9.2" height="9" fill="none" stroke="currentColor" stroke-width="1.1"/><rect x="0.4" y="4.2" width="2.4" height="2.4" fill="#595959" stroke="currentColor" stroke-width=".8"/><rect x="9.6" y="4.2" width="2.4" height="2.4" fill="#595959" stroke="currentColor" stroke-width=".8"/><rect x="0.4" y="13.2" width="2.4" height="2.4" fill="#595959" stroke="currentColor" stroke-width=".8"/><rect x="9.6" y="13.2" width="2.4" height="2.4" fill="#595959" stroke="currentColor" stroke-width=".8"/><rect x="3.9" y="1.3" width="1.8" height="1.8" fill="#595959" stroke="currentColor" stroke-width=".7" opacity=".85"/><rect x="13.3" y="1.3" width="1.8" height="1.8" fill="#595959" stroke="currentColor" stroke-width=".7" opacity=".85"/><rect x="13.3" y="10.5" width="1.8" height="1.8" fill="#595959" stroke="currentColor" stroke-width=".7" opacity=".85"/><rect x="5.4" y="9.2" width="1.6" height="1.6" fill="currentColor" opacity=".7"/></svg>
<div class="r" style="left:930.4px;top:62.9px;width:18.0px;height:18.4px;background:#595959;border-radius:4px 0 0 4px;"></div>
<svg class="i" style="left:931.4px;top:64.1px;" width="16" height="16" viewBox="0 0 16 16"><circle cx="8" cy="8" r="6.3" fill="none" stroke="currentColor" stroke-width="1"/><path d="M8 1.8 V14.2 M2 6.6 H14 M2.6 10.8 H13.4" fill="none" stroke="currentColor" stroke-width="0.9" stroke-linecap="round" stroke-linejoin="round" opacity=".85"/></svg>
<div class="r" style="left:949.0px;top:62.9px;width:18.9px;height:18.4px;background:#5578b2;border-radius:0px;"></div>
<svg class="i" style="left:950.5px;top:64.1px;" width="16" height="16" viewBox="0 0 16 16"><circle cx="8" cy="8" r="6.2" fill="#7d9fd6" stroke="#fff" stroke-width="1.2"/></svg>
<div class="r" style="left:968.5px;top:62.9px;width:19.2px;height:18.4px;background:#595959;border-radius:0px;"></div>
<svg class="i" style="left:970.1px;top:64.1px;" width="16" height="16" viewBox="0 0 16 16"><circle cx="8" cy="8" r="6.2" fill="#7a7a7a" stroke="#d8d8d8" stroke-width="1"/><path d="M8 1.8 A6.2 6.2 0 0 1 12.6 12.2 L8 8 Z" fill="#e0e0e0"/><path d="M8 1.8 A6.2 6.2 0 0 0 8 14.2 A6.2 6.2 0 0 0 12.6 12.2 L8 8 Z" fill="#8a8a8a" opacity=".01"/></svg>
<div class="r" style="left:988.3px;top:62.9px;width:19.2px;height:18.4px;background:#595959;border-radius:0px;"></div>
<svg class="i" style="left:989.9px;top:64.1px;" width="16" height="16" viewBox="0 0 16 16"><circle cx="8" cy="8" r="6.2" fill="#757575" stroke="#d8d8d8" stroke-width="1"/><path d="M3.6 7 A4.6 4.6 0 0 1 8 3.4" fill="none" stroke="#e8e8e8" stroke-width="1.2" stroke-linecap="round"/><path d="M5 12.6 A6.2 6.2 0 0 0 14 9" fill="none" stroke="#c8c8c8" stroke-width=".8" opacity=".7"/></svg>
<div class="r" style="left:1008.1px;top:62.9px;width:63.6px;height:18.4px;background:rgba(40,40,40,.84);border-radius:0 4px 4px 0;box-shadow:0 0 0 .7px rgba(85,85,85,.4);"></div>
<span class="t" style="left:1016.5px;top:65.0px;font-size:11.50px;color:#dcdcdc;letter-spacing:-0.46px;">Shading</span>
<svg class="i" style="left:1059.9px;top:69.2px" width="12" height="8" viewBox="-6 -4 12 8"><path d="M-2.9 -1.5 L0 1.8 L2.9 -1.5" fill="none" stroke="#c2c2c2" stroke-width="1.15" stroke-linecap="round" stroke-linejoin="round"/></svg>
<span class="t" style="left:75.3px;top:93.6px;font-size:11.50px;color:#ffffff;letter-spacing:-0.30px;text-shadow:0 0 2px #000,1px 1px 2px rgba(0,0,0,.9);">User Perspective</span>
<span class="t" style="left:75.3px;top:113.9px;font-size:11.50px;color:#ffffff;letter-spacing:-0.13px;text-shadow:0 0 2px #000,1px 1px 2px rgba(0,0,0,.9);">(1) Collection | Cube</span>
<svg class="i" style="left:842.6px;top:96.5px;" width="21" height="21" viewBox="0 0 21 21"><path d="M1.6 6.6 V1.6 H6.6 M14.4 1.6 H19.4 V6.6 M19.4 14.4 V19.4 H14.4 M6.6 19.4 H1.6 V14.4" fill="none" stroke="#f39a1f" stroke-width="2.1"/><path d="M6.6 15.6 V11.6 L12.8 5.4 H15.8" fill="none" stroke="#f39a1f" stroke-width="2.2" stroke-linejoin="miter" stroke-linecap="butt"/></svg>
<div class="r" style="left:875.7px;top:93.9px;width:26.8px;height:26.8px;border-radius:50%;background:rgba(34,34,34,.55)"></div>
<svg class="i" style="left:880.1px;top:98.3px;" width="18" height="18" viewBox="0 0 16 16" color="#c8c8c8"><path d="M4.2 2.6 H11.8 L14.2 13.2 H1.8 Z M6.8 2.6 L6 13.2 M9.2 2.6 L10 13.2 M3.6 5.6 H12.4 M2.8 9 H13.2" fill="none" stroke="currentColor" stroke-width="1" stroke-linecap="round" stroke-linejoin="round" /></svg>
<div class="r" style="left:905.6px;top:93.9px;width:26.8px;height:26.8px;border-radius:50%;background:rgba(34,34,34,.55)"></div>
<svg class="i" style="left:910.0px;top:98.3px;" width="18" height="18" viewBox="0 0 16 16" color="#c8c8c8"><path d="M2.4 9 H11 V14.4 H2.4 Z M11 10.6 L14.8 9 V14.6 L11 13 Z" fill="currentColor" /><circle cx="4.4" cy="5.2" r="2.1" fill="none" stroke="currentColor" stroke-width="1.7"/><circle cx="10" cy="5.2" r="2.1" fill="none" stroke="currentColor" stroke-width="1.7"/><rect x="1" y="11" width="1.6" height="1.4" fill="currentColor"/></svg>
<div class="r" style="left:936.1px;top:93.9px;width:26.8px;height:26.8px;border-radius:50%;background:rgba(34,34,34,.55)"></div>
<svg class="i" style="left:940.5px;top:98.3px;" width="18" height="18" viewBox="0 0 16 16" color="#c8c8c8"><path d="M5 15 Q2.6 11.4 1.4 8.6 Q1 7.4 2 7.2 Q2.9 7 3.6 8.2 L4.6 9.8 V3.2 Q4.6 2.2 5.5 2.2 Q6.4 2.2 6.4 3.2 V7 H6.9 V2 Q6.9 1 7.8 1 Q8.7 1 8.7 2 V7 H9.2 V2.8 Q9.2 1.8 10.1 1.8 Q11 1.8 11 2.8 V7.4 H11.5 V4.6 Q11.5 3.7 12.3 3.7 Q13.1 3.7 13.1 4.6 V11 Q13.1 13.4 11.6 15 Z" fill="currentColor" /></svg>
<div class="r" style="left:966.5px;top:93.9px;width:26.8px;height:26.8px;border-radius:50%;background:rgba(34,34,34,.55)"></div>
<svg class="i" style="left:970.9px;top:98.3px;" width="18" height="18" viewBox="0 0 16 16" color="#c8c8c8"><circle cx="10" cy="6" r="5" fill="none" stroke="currentColor" stroke-width="1.3"/><path d="M6.2 9.8 L1.8 14.2" stroke="currentColor" stroke-width="2" stroke-linecap="round"/><path d="M7.4 6 H12.6 M10 3.4 V8.6" stroke="currentColor" stroke-width="1.1"/></svg>
<svg class="i" style="left:995.0px;top:100.0px;" width="70" height="70" viewBox="-35 -35 70 70"><circle cx="-23.3" cy="-12.9" r="6.3" fill="#8e2e45"/><circle cx=".4" cy="26.3" r="6.3" fill="#2e619f"/><path d="M0 0 L22.5 -13.9" stroke="#5f8a1c" stroke-width="2.2"/><circle cx="22.5" cy="-13.9" r="7.6" fill="#5f8a1c"/><path d="M0 0 L0 -26.9" stroke="#2c8fff" stroke-width="2.2"/><path d="M0 0 L23.5 12.3" stroke="#fc3554" stroke-width="2.2" stroke-linecap="round"/><circle cx="0" cy="-26.9" r="7.8" fill="#2c8fff"/><circle cx="23.5" cy="12.3" r="7.8" fill="#fc3554"/><circle cx="-22.3" cy="13.3" r="6.3" fill="#8bc711"/><text x="0" y="-22.8" font-family="Liberation Sans,sans-serif" font-size="10.5" fill="#0c0c0c" text-anchor="middle">Z</text><text x="22.7" y="-9.8" font-family="Liberation Sans,sans-serif" font-size="10.5" fill="#0c0c0c" text-anchor="middle">Y</text><text x="23.6" y="16.4" font-family="Liberation Sans,sans-serif" font-size="10.5" fill="#0c0c0c" text-anchor="middle">X</text></svg>
<div class="r" style="left:1066.5px;top:100.5px;width:14.5px;height:13.0px;background:rgba(40,40,40,.8);border-radius:4px 0 0 4px;"></div>
<span class="t" style="left:1070.0px;top:99.8px;font-size:12.00px;color:#909090;font-weight:bold;">+</span>
<div class="r" style="left:9.1px;top:94.3px;width:38.0px;height:33.7px;background:rgba(40,40,40,.94);border-radius:4px 4px 0 0;box-shadow:0 0 0 .8px rgba(28,28,28,.55);"></div>
<svg class="i" style="left:14.0px;top:97.5px;" width="28" height="28" viewBox="0 0 28 28"><rect x="4" y="3.8" width="20.4" height="20.4" fill="none" stroke="#dca548" stroke-width="1.05" stroke-dasharray="3.4 1.7"/><path d="M11.4 8.4 L19.6 14.4 L14.6 15.2 L12.2 19.4 Z" fill="#e6e6e6"/></svg>
<svg class="i" style="left:40.5px;top:121.8px" width="5" height="5" viewBox="0 0 5 5"><path d="M5 0V5H0Z" fill="#8a8a8a"/></svg>
<div class="r" style="left:9.1px;top:128.8px;width:38.0px;height:34.5px;background:rgba(40,40,40,.94);border-radius:0 0 4px 4px;box-shadow:0 0 0 .8px rgba(28,28,28,.55);"></div>
<svg class="i" style="left:14.0px;top:132.1px;" width="28" height="28" viewBox="0 0 28 28"><circle cx="14" cy="14" r="10.9" fill="none" stroke="#e8e8e8" stroke-width="1.4"/><circle cx="14" cy="14" r="10.9" fill="none" stroke="#a02a36" stroke-width="1.4" stroke-dasharray="4.28 4.28"/><path d="M14 7.4 V12 M14 16 V20.6 M7.4 14 H12 M16 14 H20.6" stroke="#8a8a8a" stroke-width="1.4"/></svg>
<div class="r" style="left:9.1px;top:169.2px;width:38.0px;height:33.7px;background:rgba(40,40,40,.94);border-radius:4px 4px 0 0;box-shadow:0 0 0 .8px rgba(28,28,28,.55);"></div>
<svg class="i" style="left:14.0px;top:172.4px;" width="28" height="28" viewBox="0 0 28 28"><path d="M23.99 17.24 A10.5 10.5 0 0 1 17.24 23.99 M10.76 23.99 A10.5 10.5 0 0 1 4.01 17.24 M4.01 10.76 A10.5 10.5 0 0 1 10.76 4.01 M17.24 4.01 A10.5 10.5 0 0 1 23.99 10.76" fill="none" stroke="#d8d8d8" stroke-width="1.1"/><rect x="9.9" y="9.9" width="8.2" height="8.2" fill="#e6e6e6"/><path d="M14 3.6 L16.8 8.2 H11.2 Z M14 24.4 L16.8 19.8 H11.2 Z M3.6 14 L8.2 11.2 V16.8 Z M24.4 14 L19.8 11.2 V16.8 Z" fill="#e6e6e6"/></svg>
<div class="r" style="left:9.1px;top:203.7px;width:38.0px;height:33.7px;background:rgba(40,40,40,.94);border-radius:0 0 0 0;box-shadow:0 0 0 .8px rgba(28,28,28,.55);"></div>
<svg class="i" style="left:14.0px;top:206.9px;" width="28" height="28" viewBox="0 0 28 28"><path d="M14 2.6 L17 7.6 H11 Z M14 25.4 L17 20.4 H11 Z M2.6 14 L7.6 11 V17 Z M25.4 14 L20.4 11 V17 Z" fill="#e6e6e6"/><path d="M14 8.6 V11.4 M14 16.6 V19.4 M8.6 14 H11.4 M16.6 14 H19.4" stroke="#e6e6e6" stroke-width="1.6" /></svg>
<div class="r" style="left:9.1px;top:238.2px;width:38.0px;height:33.7px;background:rgba(40,40,40,.94);border-radius:0 0 0 0;box-shadow:0 0 0 .8px rgba(28,28,28,.55);"></div>
<svg class="i" style="left:14.0px;top:241.4px;" width="28" height="28" viewBox="0 0 28 28"><path d="M6.4 9.6 A9 9 0 0 1 21.6 9.6 M21.6 18.4 A9 9 0 0 1 6.4 18.4" fill="none" stroke="#e0e0e0" stroke-width="1.2"/><path d="M14 9.8 L18.2 14 L14 18.2 L9.8 14 Z" fill="#c0c0c0"/><path d="M3 11.4 H8.6 L5.8 16 Z M25 16.4 H19.4 L22.2 11.8 Z" fill="#e6e6e6"/></svg>
<div class="r" style="left:9.1px;top:272.7px;width:38.0px;height:34.5px;background:rgba(40,40,40,.94);border-radius:0 0 4px 4px;box-shadow:0 0 0 .8px rgba(28,28,28,.55);"></div>
<svg class="i" style="left:14.0px;top:275.9px;" width="28" height="28" viewBox="0 0 28 28"><path d="M5.8 12 V5.4 H22.4 V21.4 H15.6" fill="none" stroke="#b8b8b8" stroke-width="1"/><rect x="5.2" y="13.2" width="9.2" height="9.4" fill="#e6e6e6"/><path d="M15 12.8 L19.4 8.4" stroke="#e6e6e6" stroke-width="1.4"/><path d="M21 6.8 L20.4 10.8 L17 7.4 Z" fill="#e6e6e6"/></svg>
<svg class="i" style="left:40.5px;top:300.2px" width="5" height="5" viewBox="0 0 5 5"><path d="M5 0V5H0Z" fill="#8a8a8a"/></svg>
<div class="r" style="left:9.1px;top:313.9px;width:38.0px;height:33.7px;background:rgba(40,40,40,.94);border-radius:4px 4px 0 0;box-shadow:0 0 0 .8px rgba(28,28,28,.55);"></div>
<svg class="i" style="left:14.0px;top:317.1px;" width="28" height="28" viewBox="0 0 28 28"><path d="M5.6 18.6 L7 14.6 L18.6 3.4 L22.2 7 L10.6 18.2 Z" fill="#e6e6e6"/><path d="M5.2 19 L7.6 18.4 L5.9 16.7 Z" fill="#2b2b2b"/><path d="M16.8 5.2 L20.4 8.8" stroke="#2b2b2b" stroke-width="1"/><path d="M4.6 22.6 C9.4 25.4 11.6 22.8 14 20 C16.4 17.2 19.6 16.2 23.2 21" fill="none" stroke="#7fcf9c" stroke-width="1.5" stroke-linecap="round"/></svg>
<svg class="i" style="left:40.5px;top:341.4px" width="5" height="5" viewBox="0 0 5 5"><path d="M5 0V5H0Z" fill="#8a8a8a"/></svg>
<div class="r" style="left:9.1px;top:348.4px;width:38.0px;height:34.5px;background:rgba(40,40,40,.94);border-radius:0 0 4px 4px;box-shadow:0 0 0 .8px rgba(28,28,28,.55);"></div>
<svg class="i" style="left:14.0px;top:351.6px;" width="28" height="28" viewBox="0 0 28 28"><path d="M9.6 12 A11.6 11.6 0 0 1 20.6 22.4 H9.6 Z" fill="#8fdcb0"/><path d="M9.6 15.6 A7.6 7.6 0 0 1 17 22.4" fill="none" stroke="#3a7a58" stroke-width="1"/><path d="M5.4 2.6 H9.4 V21.2 H23.8 V25 H5.4 Z" fill="#e6e6e6"/><path d="M7.4 5 H9.4 M7.4 8 H9.4 M7.4 11 H9.4 M7.4 14 H9.4 M7.4 17 H9.4 M11 23 V25 M14 23 V25 M17 23 V25 M20 23 V25 M22.6 23 V25" stroke="#2b2b2b" stroke-width="1"/></svg>
<div class="r" style="left:9.1px;top:388.5px;width:38.0px;height:34.5px;background:#5681c5;border-radius:4px 4px 4px 4px;box-shadow:0 0 0 .8px rgba(28,28,28,.55);"></div>
<svg class="i" style="left:14.0px;top:391.8px;" width="28" height="28" viewBox="0 0 28 28"><path d="M5.8 12 V5.4 H22.4 V21.4 H15.6" fill="none" stroke="#b9c7e4" stroke-width="1"/><rect x="5.2" y="13.2" width="9.2" height="9.4" fill="#e9e9e9"/><path d="M15 12.8 L19.4 8.4" stroke="#fff" stroke-width="1.4"/><path d="M21 6.8 L20.4 10.8 L17 7.4 Z" fill="#fff"/></svg>
<div class="r" style="left:1083.0px;top:60.0px;width:225.0px;height:194.0px;background:#282828;border-radius:5px;"></div>
<div class="r" style="left:1083.0px;top:106.0px;width:225.0px;height:20.0px;background:#2d2d2d;border-radius:0px;"></div>
<div class="r" style="left:1083.0px;top:146.0px;width:225.0px;height:20.0px;background:#2d2d2d;border-radius:0px;"></div>
<div class="r" style="left:1083.0px;top:186.0px;width:225.0px;height:20.0px;background:#2d2d2d;border-radius:0px;"></div>
<div class="r" style="left:1083.0px;top:226.0px;width:225.0px;height:20.0px;background:#2d2d2d;border-radius:0px;"></div>
<div class="r" style="left:1083.0px;top:60.0px;width:225.0px;height:25.0px;background:#3e3e3e;border-radius:5px 5px 0 0;"></div>
<div class="r" style="left:1221.0px;top:85.0px;width:1.2px;height:169.0px;background:#1b1b1b;"></div>
<div class="r" style="left:1240.9px;top:85.0px;width:1.2px;height:169.0px;background:#1b1b1b;"></div>
<div class="r" style="left:1260.8px;top:85.0px;width:1.2px;height:169.0px;background:#1b1b1b;"></div>
<div class="r" style="left:1280.7px;top:85.0px;width:1.2px;height:169.0px;background:#1b1b1b;"></div>
<div class="r" style="left:1092.2px;top:62.5px;width:29.7px;height:18.8px;background:#2b2b2b;border-radius:4px;border:1px solid #464646;"></div>
<svg class="i" style="left:1095.5px;top:64.0px;" width="16" height="16" viewBox="0 0 16 16"><rect x="1.6" y="1.8" width="5" height="3" fill="#e6e6e6"/><rect x="8.4" y="6.6" width="6.4" height="3" fill="#e6e6e6"/><rect x="8.4" y="11.2" width="6.4" height="3" fill="#e6e6e6"/><path d="M3.6 5.6 V12.8 H7.4 M3.6 8.2 H7.4" fill="none" stroke="currentColor" stroke-width="1" stroke-linecap="round" stroke-linejoin="round" /></svg>
<svg class="i" style="left:1109.5px;top:69.2px" width="12" height="8" viewBox="-6 -4 12 8"><path d="M-2.9 -1.5 L0 1.8 L2.9 -1.5" fill="none" stroke="#c2c2c2" stroke-width="1.15" stroke-linecap="round" stroke-linejoin="round"/></svg>
<div class="r" style="left:1129.3px;top:62.5px;width:30.2px;height:18.8px;background:#2b2b2b;border-radius:4px;border:1px solid #464646;"></div>
<svg class="i" style="left:1132.5px;top:64.0px;" width="16" height="16" viewBox="0 0 16 16"><path d="M2 5.5 V13.5 H10.5 M4 3.7 V11.6 H12.4" fill="none" stroke="currentColor" stroke-width="1" stroke-linecap="round" stroke-linejoin="round" /><path d="M6 1.8 H14.2 V9.8 H6 Z" fill="none" stroke="currentColor" stroke-width="1.1"/><path d="M6.6 9.2 L9.2 5.4 L10.8 7.6 L11.8 6.4 L13.6 9.2 Z" fill="currentColor" /><circle cx="12.2" cy="3.9" r=".9" fill="currentColor"/></svg>
<svg class="i" style="left:1147.0px;top:69.2px" width="12" height="8" viewBox="-6 -4 12 8"><path d="M-2.9 -1.5 L0 1.8 L2.9 -1.5" fill="none" stroke="#c2c2c2" stroke-width="1.15" stroke-linecap="round" stroke-linejoin="round"/></svg>
<div class="r" style="left:1177.3px;top:63.1px;width:108.3px;height:17.6px;background:#1d1d1d;border-radius:3.5px;box-shadow:0 0 0 .8px #4a4a4a;"></div>
<svg class="i" style="left:1179.5px;top:64.0px;" width="16" height="16" viewBox="0 0 16 16"><circle cx="9.6" cy="6.2" r="4.6" fill="none" stroke="#e0e0e0" stroke-width="1.3"/><path d="M6.2 9.6 L1.8 14" stroke="#e0e0e0" stroke-width="1.8" stroke-linecap="round"/></svg>
<div class="r" style="left:1303.3px;top:62.5px;width:8.7px;height:18.8px;background:#2b2b2b;border-radius:4px 0 0 4px;border:1px solid #464646;"></div>
<div class="r" style="left:1083px;top:86px;width:90px;height:40px;overflow:hidden"><span class="t" style="left:-3.5px;top:4.0px;font-size:11.50px;color:#c8c8c8;letter-spacing:-0.21px;">Scene Collection</span></div>
<div class="r" style="left:1083px;top:106px;width:14px;height:20px;overflow:hidden"><div class="r" style="left:-7.5px;top:0.2px;width:20px;height:20px;border-radius:50%;background:#70768c"></div><svg class="i" style="left:-5.5px;top:2.4px;" width="16" height="16" viewBox="0 0 16 16"><path d="M1.4 2.2 H14.6 V5.6 H1.4 Z" fill="#e6e6e6"/><path d="M2.4 6.4 H13.6 V13.8 H2.4 Z" fill="#e6e6e6"/><rect x="5.6" y="8" width="4.8" height="1.4" fill="#2d2d2d"/></svg></div>
<span class="t" style="left:1099.6px;top:109.8px;font-size:11.50px;color:#dcdcdc;letter-spacing:-0.10px;">Collection</span>
<div class="r" style="left:1159.4px;top:110.8px;width:1.4px;height:11.0px;background:#0d0d0d;"></div>
<div class="r" style="left:1169.8px;top:107.4px;width:18px;height:18px;border-radius:50%;background:#555"></div>
<svg class="i" style="left:1170.8px;top:108.4px;" width="16" height="16" viewBox="0 0 16 16"><path d="M3 3.6 H13 L8 13 Z" fill="none" stroke="#d8843c" stroke-width="2.3" stroke-linejoin="round"/></svg>
<svg class="i" style="left:1190.7px;top:108.4px;" width="16" height="16" viewBox="0 0 16 16"><path d="M8 1.2 A5 5 0 0 1 10.8 10.2 V11.2 H5.2 V10.2 A5 5 0 0 1 8 1.2 Z" fill="#d8843c"/><path d="M5.6 12.4 H10.4 M6.4 14.2 H9.6" stroke="#d8843c" stroke-width="1.2"/><path d="M6.4 6 L7.2 8.6 H8.8 L9.6 6" fill="none" stroke="#2b2b2b" stroke-width=".8"/></svg>
<div class="r" style="left:1208px;top:106px;width:13px;height:20px;overflow:hidden"><svg class="i" style="left:2.0px;top:2.4px;" width="16" height="16" viewBox="0 0 16 16"><path d="M1.2 2.4 H9 V8 H1.2 Z" fill="#d8843c"/><circle cx="3.4" cy="5" r="1.2" fill="#2b2b2b"/><path d="M2.2 9 H8 V14 H2.2 Z M8.2 10.4 L12 9 V14 L8.2 12.8 Z" fill="#d8843c"/></svg></div>
<svg class="i" style="left:1223.3px;top:108.4px;" width="16" height="16" viewBox="0 0 16 16"><path d="M1.4 8 Q8 1.6 14.6 8 Q8 14.4 1.4 8 Z" fill="none" stroke="#e0e0e0" stroke-width="1.2"/><circle cx="8" cy="7.8" r="2.3" fill="#e0e0e0"/></svg>
<svg class="i" style="left:1243.0px;top:108.4px;" width="16" height="16" viewBox="0 0 16 16"><path d="M3 2.4 L13.4 8 L8.6 9.2 L6.4 14 Z" fill="#e0e0e0"/></svg>
<svg class="i" style="left:1262.7px;top:108.4px;" width="16" height="16" viewBox="0 0 16 16"><path d="M1.6 2.6 H14.4 V11 H1.6 Z" fill="none" stroke="#e0e0e0" stroke-width="1.3"/><rect x="3.4" y="4.4" width="9.2" height="4.8" fill="#e0e0e0"/><path d="M8 11 V13 M4.6 13.6 H11.4" stroke="#e0e0e0" stroke-width="1.3"/></svg>
<svg class="i" style="left:1282.6px;top:108.4px;" width="16" height="16" viewBox="0 0 16 16"><path d="M1.4 4.4 H4.6 L5.6 2.8 H10.4 L11.4 4.4 H14.6 V13 H1.4 Z" fill="#e0e0e0"/><circle cx="8" cy="8.6" r="3" fill="#2b2b2b"/><circle cx="8" cy="8.6" r="1.7" fill="#e0e0e0"/></svg>
<div class="r" style="left:1083.0px;top:257.0px;width:225.0px;height:412.0px;background:#424242;border-radius:5px;"></div>
<div class="r" style="left:1083.0px;top:257.0px;width:225.0px;height:25.0px;background:#3c3c3c;border-radius:5px 5px 0 0;"></div>
<div class="r" style="left:1083.0px;top:282.0px;width:28.0px;height:387.0px;background:#262626;border-radius:0 0 0 5px;"></div>
<div class="r" style="left:1092.0px;top:260.2px;width:30.1px;height:18.6px;background:#2b2b2b;border-radius:4px;border:1px solid #464646;"></div>
<svg class="i" style="left:1094.9px;top:261.0px;" width="16" height="16" viewBox="0 0 16 16"><rect x="1.6" y="1.7" width="12.8" height="4.8" rx="2.4" fill="none" stroke="#d4d4d4" stroke-width="1"/><rect x="1.6" y="9.5" width="12.8" height="4.8" rx="2.4" fill="none" stroke="#d4d4d4" stroke-width="1"/><rect x="3.4" y="3.2" width="4.8" height="1.8" fill="#ececec"/><rect x="3.4" y="11" width="9.2" height="1.8" fill="#ececec"/></svg>
<svg class="i" style="left:1110.3px;top:266.2px" width="12" height="8" viewBox="-6 -4 12 8"><path d="M-2.9 -1.5 L0 1.8 L2.9 -1.5" fill="none" stroke="#c2c2c2" stroke-width="1.15" stroke-linecap="round" stroke-linejoin="round"/></svg>
<svg class="i" style="left:1136.2px;top:261.5px;" width="16" height="16" viewBox="0 0 16 16"><path d="M1.5 4.6 V1.5 H4.6 M11.4 1.5 H14.5 V4.6 M14.5 11.4 V14.5 H11.4 M4.6 14.5 H1.5 V11.4" fill="none" stroke="currentColor" stroke-width="1" stroke-linecap="round" stroke-linejoin="round" /><rect x="4.2" y="4.2" width="7.6" height="7.6" fill="#dedede"/></svg>
<span class="t" style="left:1160.3px;top:262.2px;font-size:11.50px;color:#dcdcdc;letter-spacing:-0.57px;">Cube</span>
<svg class="i" style="left:1283.0px;top:261.3px;" width="16" height="16" viewBox="0 0 16 16"><path d="M9.4 1.6 L14.4 6.6 L12.8 7 L10.6 9.2 L10.4 12.2 L3.8 5.6 L6.8 5.4 L9 3.2 Z" fill="none" stroke="#d0d0d0" stroke-width="1.1" stroke-linejoin="round"/><path d="M6.6 9.4 L2 14" stroke="#d0d0d0" stroke-width="1.2" stroke-linecap="round"/></svg>
<div class="r" style="left:1084.6px;top:291.2px;width:26.4px;height:26.6px;background:#303030;border-radius:4px 0 0 4px;"></div>
<svg class="i" style="left:1089.8px;top:296.5px;" width="16" height="16" viewBox="0 0 16 16" color="#c4c4c4"><path d="M4.2 1.6 V7.8" stroke="currentColor" stroke-width="1.4"/><path d="M2.6 8.2 H5.8 V12.4 Q5.8 14.4 4.2 14.4 Q2.6 14.4 2.6 12.4 Z" fill="currentColor"/><path d="M9 1.8 V4.6 Q9 6 10.2 6.4 V14.4 H12.2 V6.4 Q13.4 6 13.4 4.6 V1.8 H12.2 V4.4 H10.2 V1.8 Z" fill="currentColor"/></svg>
<div class="r" style="left:1084.6px;top:326.6px;width:26.4px;height:26.8px;background:#303030;border-radius:4px 0 0 4px;"></div>
<svg class="i" style="left:1089.8px;top:331.9px;" width="16" height="16" viewBox="0 0 16 16" color="#c4c4c4"><path d="M1.6 4.6 H4.4 L5.2 3 H9 L9.8 4.6 H14.4 V13.4 H1.6 Z" fill="currentColor"/><rect x="3.2" y="6.4" width="6.8" height="5" fill="#303030"/><path d="M3.2 8 H10 M3.2 9.8 H10" stroke="currentColor" stroke-width=".9"/><rect x="11.4" y="6.4" width="1.6" height="1.6" fill="#303030"/><rect x="11.4" y="9.6" width="1.6" height="1.6" fill="#303030"/></svg>
<div class="r" style="left:1084.6px;top:354.8px;width:26.4px;height:26.6px;background:#303030;border-radius:4px 0 0 4px;"></div>
<svg class="i" style="left:1089.8px;top:360.1px;" width="16" height="16" viewBox="0 0 16 16" color="#c4c4c4"><path d="M1.6 2.4 H14.4 V8.6 H12.2 V6.6 H3.8 V8.6 H1.6 Z" fill="currentColor"/><path d="M4.6 7.6 H11.4 V14 H4.6 Z" fill="none" stroke="currentColor" stroke-width="1.1"/><rect x="11.6" y="3.6" width="1.6" height="1.2" fill="#303030"/></svg>
<div class="r" style="left:1084.6px;top:383.0px;width:26.4px;height:26.4px;background:#303030;border-radius:4px 0 0 4px;"></div>
<svg class="i" style="left:1089.8px;top:388.2px;" width="16" height="16" viewBox="0 0 16 16" color="#c4c4c4"><path d="M2 5.5 V13.5 H10.5 M4 3.7 V11.6 H12.4" fill="none" stroke="currentColor" stroke-width="1" stroke-linecap="round" stroke-linejoin="round" /><path d="M6 1.8 H14.2 V9.8 H6 Z" fill="none" stroke="currentColor" stroke-width="1.1"/><path d="M6.6 9.2 L9.2 5.4 L10.8 7.6 L11.8 6.4 L13.6 9.2 Z" fill="currentColor" /><circle cx="12.2" cy="3.9" r=".9" fill="currentColor"/></svg>
<div class="r" style="left:1084.6px;top:411.2px;width:26.4px;height:26.6px;background:#303030;border-radius:4px 0 0 4px;"></div>
<svg class="i" style="left:1089.8px;top:416.5px;" width="16" height="16" viewBox="0 0 16 16" color="#c4c4c4"><path d="M5.5 .8 L9.6 10.6 Q5.4 14.4 .9 11.3 Z" fill="currentColor" /><circle cx="10.9" cy="11" r="4.4" fill="#303030"/><circle cx="10.9" cy="11" r="3.5" fill="none" stroke="currentColor" stroke-width="1.1"/><circle cx="12.9" cy="2.9" r="2.1" fill="currentColor"/><path d="M9.2 10.2 A2 2 0 0 1 10.6 8.9" fill="none" stroke="currentColor" stroke-width="0.8" stroke-linecap="round" stroke-linejoin="round" /></svg>
<div class="r" style="left:1084.6px;top:439.6px;width:26.4px;height:26.6px;background:#303030;border-radius:4px 0 0 4px;"></div>
<svg class="i" style="left:1089.8px;top:444.9px;" width="16" height="16" viewBox="0 0 16 16" color="#c4c4c4"><circle cx="8" cy="8" r="6" fill="none" stroke="currentColor" stroke-width="1.2"/><path d="M3.2 5 Q5.4 3.4 7.4 4.4 Q9 5.6 7.4 7 Q5.6 8 6.6 9.8 Q7.6 11.2 6.4 13 Q3 11.6 2.6 8 Z M10 6.4 Q12 5.6 13.6 7 Q14 10 12 12.4 Q10.4 11.4 10.8 9.6 Q11 8 10 6.4 Z" fill="currentColor"/><path d="M11 1.6 L14.8 .8 M1.4 15 L5 14.4" stroke="currentColor" stroke-width="1"/></svg>
<div class="r" style="left:1084.6px;top:474.0px;width:26.4px;height:27.8px;background:#424242;border-radius:4px 0 0 4px;"></div>
<svg class="i" style="left:1089.8px;top:479.3px;" width="16" height="16" viewBox="0 0 16 16" color="#ffffff"><path d="M1.8 5 V1.8 H5 M11 1.8 H14.2 V5 M14.2 11 V14.2 H11 M5 14.2 H1.8 V11" fill="none" stroke="currentColor" stroke-width="1.3"/><rect x="4.2" y="4.2" width="7.6" height="7.6" fill="currentColor"/></svg>
<div class="r" style="left:1084.6px;top:503.2px;width:26.4px;height:26.4px;background:#303030;border-radius:4px 0 0 4px;"></div>
<svg class="i" style="left:1089.8px;top:508.4px;" width="16" height="16" viewBox="0 0 16 16" color="#c4c4c4"><path d="M2.6 6.6 L9.6 2.6 A2.9 2.9 0 0 1 14 6.4 L10.6 12.2 A4.9 4.9 0 1 1 2.6 6.6 Z" fill="none" stroke="currentColor" stroke-width="1.1" stroke-linejoin="round"/><circle cx="6.2" cy="9.8" r="2.4" fill="none" stroke="currentColor" stroke-width="1.1"/><circle cx="6.2" cy="9.8" r=".8" fill="currentColor"/><circle cx="11.4" cy="5" r=".8" fill="currentColor"/></svg>
<div class="r" style="left:1084.6px;top:531.6px;width:26.4px;height:26.2px;background:#303030;border-radius:4px 0 0 4px;"></div>
<svg class="i" style="left:1089.8px;top:536.7px;" width="16" height="16" viewBox="0 0 16 16" color="#c4c4c4"><path d="M10.6 1.6 A4 4 0 0 0 6.8 7 L2 11.8 Q1.2 13.2 2.4 14.2 Q3.6 15 4.6 13.8 L9.2 9 A4 4 0 0 0 14.4 5.2 L12 7 L9.6 6.4 L9.2 4 Z" fill="none" stroke="currentColor" stroke-width="1.2" stroke-linejoin="round"/></svg>
<div class="r" style="left:1084.6px;top:559.8px;width:26.4px;height:25.8px;background:#303030;border-radius:4px 0 0 4px;"></div>
<svg class="i" style="left:1089.8px;top:564.7px;" width="16" height="16" viewBox="0 0 16 16" color="#c4c4c4"><path d="M3 3.2 H13 L8 13 Z" fill="none" stroke="currentColor" stroke-width="1.1"/><rect x="1.5" y="1.7" width="3" height="3" fill="#303030" stroke="currentColor" stroke-width="1"/><rect x="11.5" y="1.7" width="3" height="3" fill="#303030" stroke="currentColor" stroke-width="1"/><rect x="6.5" y="11.5" width="3" height="3" fill="#303030" stroke="currentColor" stroke-width="1"/></svg>
<div class="r" style="left:1084.6px;top:587.8px;width:26.4px;height:25.6px;background:#303030;border-radius:4px 0 0 4px;"></div>
<svg class="i" style="left:1089.8px;top:592.6px;" width="16" height="16" viewBox="0 0 16 16" color="#c4c4c4"><circle cx="8" cy="8" r="6.1" fill="currentColor"/><path d="M8 8 V13.4 A5.4 5.4 0 0 1 2.6 8 Z" fill="#303030"/><path d="M2.6 8 H13.4 M8 2.6 V13.4" stroke="#303030" stroke-width=".5" opacity=".6"/></svg>
<div class="r" style="left:1084.6px;top:615.4px;width:26.4px;height:26.4px;background:#303030;border-radius:4px 0 0 4px;"></div>
<svg class="i" style="left:1089.8px;top:620.6px;" width="16" height="16" viewBox="0 0 16 16" color="#c4c4c4"><rect x="1.8" y="1.8" width="3.1" height="3.1" fill="currentColor"/><rect x="1.8" y="8" width="3.1" height="3.1" fill="currentColor"/><rect x="4.9" y="4.9" width="3.1" height="3.1" fill="currentColor"/><rect x="4.9" y="11.1" width="3.1" height="3.1" fill="currentColor"/><rect x="8" y="1.8" width="3.1" height="3.1" fill="currentColor"/><rect x="8" y="8" width="3.1" height="3.1" fill="currentColor"/><rect x="11.1" y="4.9" width="3.1" height="3.1" fill="currentColor"/><rect x="11.1" y="11.1" width="3.1" height="3.1" fill="currentColor"/><rect x="1.8" y="1.8" width="12.4" height="12.4" fill="none" stroke="currentColor" stroke-width=".6"/></svg>
<div class="r" style="left:1084.6px;top:643.8px;width:26.4px;height:25.2px;background:#303030;border-radius:4px 0 0 0;"></div>
<svg class="i" style="left:1089.8px;top:648.4px;" width="16" height="16" viewBox="0 0 16 16" color="#c4c4c4"><path d="M4.2 12.6 V4 M4.2 12.6 L12 4.4 M4.2 12.6 H12.6" stroke="currentColor" stroke-width="1" fill="none"/><circle cx="4.2" cy="12.6" r="2.1" fill="currentColor"/><circle cx="12.2" cy="4.2" r="1.7" fill="currentColor"/><circle cx="4.2" cy="3.6" r="1.1" fill="currentColor"/><circle cx="12.8" cy="12.6" r="1.1" fill="currentColor"/></svg>
<div class="r" style="left:1150.5px;top:291.4px;width:149.3px;height:17.6px;background:#1d1d1d;border-radius:0 3.5px 3.5px 0;box-shadow:0 0 0 .8px #4a4a4a;"></div>
<span class="t" style="left:1158.4px;top:293.2px;font-size:11.50px;color:#dcdcdc;letter-spacing:-0.57px;">Cube</span>
<div class="r" style="left:1120.5px;top:290.8px;width:30.0px;height:18.8px;background:#2e2e2e;border-radius:4px 0 0 4px;border:1px solid #4a4a4a;border-right:none;"></div>
<svg class="i" style="left:1123.5px;top:292.2px;" width="16" height="16" viewBox="0 0 16 16"><path d="M1.5 4.6 V1.5 H4.6 M11.4 1.5 H14.5 V4.6 M14.5 11.4 V14.5 H11.4 M4.6 14.5 H1.5 V11.4" fill="none" stroke="currentColor" stroke-width="1" stroke-linecap="round" stroke-linejoin="round" /><rect x="4.2" y="4.2" width="7.6" height="7.6" fill="#dedede"/></svg>
<svg class="i" style="left:1138.3px;top:297.4px" width="12" height="8" viewBox="-6 -4 12 8"><path d="M-2.9 -1.5 L0 1.8 L2.9 -1.5" fill="none" stroke="#c2c2c2" stroke-width="1.15" stroke-linecap="round" stroke-linejoin="round"/></svg>
<div class="r" style="left:1111.0px;top:342.0px;width:197.0px;height:248.4px;background:#3c3c3c;"></div>
<svg class="i" style="left:1122.2px;top:325.5px;" width="8" height="8" viewBox="0 0 8 8"><path d="M.8 1.6 H7.2 L4 7 Z" fill="#b0b0b0"/></svg>
<span class="t" style="left:1136.4px;top:322.2px;font-size:12.00px;color:#dcdcdc;letter-spacing:0.17px;">Transform</span>
<svg class="i" style="left:1288.2px;top:324.5px;" width="12" height="12" viewBox="0 0 12 12"><rect x="1" y="4.2" width="1.6" height="1.6" fill="#262626"/><rect x="1" y="6.6" width="1.6" height="1.6" fill="#262626"/><rect x="3.6" y="4.2" width="1.6" height="1.6" fill="#262626"/><rect x="3.6" y="6.6" width="1.6" height="1.6" fill="#262626"/><rect x="6.2" y="4.2" width="1.6" height="1.6" fill="#262626"/><rect x="6.2" y="6.6" width="1.6" height="1.6" fill="#262626"/><rect x="8.8" y="4.2" width="1.6" height="1.6" fill="#262626"/><rect x="8.8" y="6.6" width="1.6" height="1.6" fill="#262626"/></svg>
<div class="r" style="left:1200.8px;top:351.2px;width:59.8px;height:18.7px;background:#595959;border-radius:4px 4px 0 0;"></div>
<span class="t" style="left:1135.0px;top:353.1px;font-size:11.50px;color:#dcdcdc;">Location X</span>
<span class="t" style="left:1222.2px;top:353.1px;font-size:11.50px;color:#dcdcdc;">0m</span>
<svg class="i" style="left:1261.0px;top:352.4px;" width="16" height="16" viewBox="0 0 16 16"><path d="M3.4 7.6 V5 A2.4 2.4 0 0 1 8.2 5 V6.4" fill="none" stroke="#b6b6b6" stroke-width=".95"/><path d="M6.4 7.8 H13 V13.2 H6.4 Z" fill="none" stroke="#b6b6b6" stroke-width=".95"/><path d="M8.8 9.6 H10.6 V11.2 Z" fill="#b6b6b6"/></svg>
<div class="r" style="left:1289.4px;top:358.6px;width:3.6px;height:3.6px;background:#d9d9d9;border-radius:50%;"></div>
<div class="r" style="left:1200.8px;top:370.8px;width:59.8px;height:18.7px;background:#595959;border-radius:0px;"></div>
<span class="t" style="left:1181.6px;top:372.7px;font-size:11.50px;color:#dcdcdc;">Y</span>
<span class="t" style="left:1222.2px;top:372.7px;font-size:11.50px;color:#dcdcdc;">0m</span>
<svg class="i" style="left:1261.0px;top:372.0px;" width="16" height="16" viewBox="0 0 16 16"><path d="M3.4 7.6 V5 A2.4 2.4 0 0 1 8.2 5 V6.4" fill="none" stroke="#b6b6b6" stroke-width=".95"/><path d="M6.4 7.8 H13 V13.2 H6.4 Z" fill="none" stroke="#b6b6b6" stroke-width=".95"/><path d="M8.8 9.6 H10.6 V11.2 Z" fill="#b6b6b6"/></svg>
<div class="r" style="left:1289.4px;top:378.2px;width:3.6px;height:3.6px;background:#d9d9d9;border-radius:50%;"></div>
<div class="r" style="left:1200.8px;top:390.4px;width:59.8px;height:18.7px;background:#595959;border-radius:0 0 4px 4px;"></div>
<span class="t" style="left:1182.3px;top:392.3px;font-size:11.50px;color:#dcdcdc;">Z</span>
<span class="t" style="left:1222.2px;top:392.3px;font-size:11.50px;color:#dcdcdc;">0m</span>
<svg class="i" style="left:1261.0px;top:391.6px;" width="16" height="16" viewBox="0 0 16 16"><path d="M3.4 7.6 V5 A2.4 2.4 0 0 1 8.2 5 V6.4" fill="none" stroke="#b6b6b6" stroke-width=".95"/><path d="M6.4 7.8 H13 V13.2 H6.4 Z" fill="none" stroke="#b6b6b6" stroke-width=".95"/><path d="M8.8 9.6 H10.6 V11.2 Z" fill="#b6b6b6"/></svg>
<div class="r" style="left:1289.4px;top:397.8px;width:3.6px;height:3.6px;background:#d9d9d9;border-radius:50%;"></div>
<div class="r" style="left:1200.8px;top:413.0px;width:59.8px;height:18.7px;background:#595959;border-radius:4px 4px 0 0;"></div>
<span class="t" style="left:1135.6px;top:414.9px;font-size:11.50px;color:#dcdcdc;">Rotation X</span>
<span class="t" style="left:1224.7px;top:414.9px;font-size:11.50px;color:#dcdcdc;">0°</span>
<svg class="i" style="left:1261.0px;top:414.2px;" width="16" height="16" viewBox="0 0 16 16"><path d="M3.4 7.6 V5 A2.4 2.4 0 0 1 8.2 5 V6.4" fill="none" stroke="#b6b6b6" stroke-width=".95"/><path d="M6.4 7.8 H13 V13.2 H6.4 Z" fill="none" stroke="#b6b6b6" stroke-width=".95"/><path d="M8.8 9.6 H10.6 V11.2 Z" fill="#b6b6b6"/></svg>
<div class="r" style="left:1289.4px;top:420.4px;width:3.6px;height:3.6px;background:#d9d9d9;border-radius:50%;"></div>
<div class="r" style="left:1200.8px;top:432.6px;width:59.8px;height:18.7px;background:#595959;border-radius:0px;"></div>
<span class="t" style="left:1181.6px;top:434.5px;font-size:11.50px;color:#dcdcdc;">Y</span>
<span class="t" style="left:1224.7px;top:434.5px;font-size:11.50px;color:#dcdcdc;">0°</span>
<svg class="i" style="left:1261.0px;top:433.8px;" width="16" height="16" viewBox="0 0 16 16"><path d="M3.4 7.6 V5 A2.4 2.4 0 0 1 8.2 5 V6.4" fill="none" stroke="#b6b6b6" stroke-width=".95"/><path d="M6.4 7.8 H13 V13.2 H6.4 Z" fill="none" stroke="#b6b6b6" stroke-width=".95"/><path d="M8.8 9.6 H10.6 V11.2 Z" fill="#b6b6b6"/></svg>
<div class="r" style="left:1289.4px;top:440.0px;width:3.6px;height:3.6px;background:#d9d9d9;border-radius:50%;"></div>
<div class="r" style="left:1200.8px;top:452.2px;width:59.8px;height:18.7px;background:#595959;border-radius:0 0 4px 4px;"></div>
<span class="t" style="left:1182.3px;top:454.1px;font-size:11.50px;color:#dcdcdc;">Z</span>
<span class="t" style="left:1224.7px;top:454.1px;font-size:11.50px;color:#dcdcdc;">0°</span>
<svg class="i" style="left:1261.0px;top:453.4px;" width="16" height="16" viewBox="0 0 16 16"><path d="M3.4 7.6 V5 A2.4 2.4 0 0 1 8.2 5 V6.4" fill="none" stroke="#b6b6b6" stroke-width=".95"/><path d="M6.4 7.8 H13 V13.2 H6.4 Z" fill="none" stroke="#b6b6b6" stroke-width=".95"/><path d="M8.8 9.6 H10.6 V11.2 Z" fill="#b6b6b6"/></svg>
<div class="r" style="left:1289.4px;top:459.6px;width:3.6px;height:3.6px;background:#d9d9d9;border-radius:50%;"></div>
<div class="r" style="left:1200.8px;top:474.9px;width:59.8px;height:18.7px;background:#595959;border-radius:4px 4px 0 0;"></div>
<span class="t" style="left:1149.7px;top:476.8px;font-size:11.50px;color:#dcdcdc;">Scale X</span>
<span class="t" style="left:1215.8px;top:476.8px;font-size:11.50px;color:#dcdcdc;">1.000</span>
<svg class="i" style="left:1261.0px;top:476.1px;" width="16" height="16" viewBox="0 0 16 16"><path d="M3.4 7.6 V5 A2.4 2.4 0 0 1 8.2 5 V6.4" fill="none" stroke="#b6b6b6" stroke-width=".95"/><path d="M6.4 7.8 H13 V13.2 H6.4 Z" fill="none" stroke="#b6b6b6" stroke-width=".95"/><path d="M8.8 9.6 H10.6 V11.2 Z" fill="#b6b6b6"/></svg>
<div class="r" style="left:1289.4px;top:482.3px;width:3.6px;height:3.6px;background:#d9d9d9;border-radius:50%;"></div>
<div class="r" style="left:1200.8px;top:494.5px;width:59.8px;height:18.7px;background:#595959;border-radius:0px;"></div>
<span class="t" style="left:1181.6px;top:496.4px;font-size:11.50px;color:#dcdcdc;">Y</span>
<span class="t" style="left:1215.8px;top:496.4px;font-size:11.50px;color:#dcdcdc;">1.000</span>
<svg class="i" style="left:1261.0px;top:495.7px;" width="16" height="16" viewBox="0 0 16 16"><path d="M3.4 7.6 V5 A2.4 2.4 0 0 1 8.2 5 V6.4" fill="none" stroke="#b6b6b6" stroke-width=".95"/><path d="M6.4 7.8 H13 V13.2 H6.4 Z" fill="none" stroke="#b6b6b6" stroke-width=".95"/><path d="M8.8 9.6 H10.6 V11.2 Z" fill="#b6b6b6"/></svg>
<div class="r" style="left:1289.4px;top:501.9px;width:3.6px;height:3.6px;background:#d9d9d9;border-radius:50%;"></div>
<div class="r" style="left:1200.8px;top:514.1px;width:59.8px;height:18.7px;background:#595959;border-radius:0 0 4px 4px;"></div>
<span class="t" style="left:1182.3px;top:516.0px;font-size:11.50px;color:#dcdcdc;">Z</span>
<span class="t" style="left:1215.8px;top:516.0px;font-size:11.50px;color:#dcdcdc;">1.000</span>
<svg class="i" style="left:1261.0px;top:515.3px;" width="16" height="16" viewBox="0 0 16 16"><path d="M3.4 7.6 V5 A2.4 2.4 0 0 1 8.2 5 V6.4" fill="none" stroke="#b6b6b6" stroke-width=".95"/><path d="M6.4 7.8 H13 V13.2 H6.4 Z" fill="none" stroke="#b6b6b6" stroke-width=".95"/><path d="M8.8 9.6 H10.6 V11.2 Z" fill="#b6b6b6"/></svg>
<div class="r" style="left:1289.4px;top:521.5px;width:3.6px;height:3.6px;background:#d9d9d9;border-radius:50%;"></div>
<span class="t" style="left:1118.5px;top:542.2px;font-size:11.50px;color:#dcdcdc;letter-spacing:-0.23px;">Rotation Mode</span>
<div class="r" style="left:1200.4px;top:539.6px;width:60.2px;height:19.0px;background:#2b2b2b;border-radius:4px;border:1px solid #383838;"></div>
<span class="t" style="left:1208.0px;top:542.2px;font-size:11.50px;color:#dcdcdc;letter-spacing:-0.45px;">XYZ E..</span>
<svg class="i" style="left:1248.0px;top:546.4px" width="12" height="8" viewBox="-6 -4 12 8"><path d="M-2.9 -1.5 L0 1.8 L2.9 -1.5" fill="none" stroke="#c2c2c2" stroke-width="1.15" stroke-linecap="round" stroke-linejoin="round"/></svg>
<div class="r" style="left:1289.4px;top:547.3px;width:3.6px;height:3.6px;background:#d9d9d9;border-radius:50%;"></div>
<svg class="i" style="left:1127.0px;top:574.0px;" width="8" height="8" viewBox="0 0 8 8"><path d="M1.6 .8 V7.2 L7 4 Z" fill="#b0b0b0"/></svg>
<span class="t" style="left:1141.2px;top:571.0px;font-size:11.50px;color:#dcdcdc;letter-spacing:-0.17px;">Delta Transform</span>
<div class="r" style="left:1111.0px;top:590.4px;width:197.0px;height:1.0px;background:#3b3b3b;"></div>
<svg class="i" style="left:1122.0px;top:598.4px;" width="8" height="8" viewBox="0 0 8 8"><path d="M1.6 .8 V7.2 L7 4 Z" fill="#b0b0b0"/></svg>
<span class="t" style="left:1136.2px;top:595.2px;font-size:12.00px;color:#dcdcdc;letter-spacing:0.20px;">Relations</span>
<svg class="i" style="left:1288.2px;top:597.4px;" width="12" height="12" viewBox="0 0 12 12"><rect x="1" y="4.2" width="1.6" height="1.6" fill="#262626"/><rect x="1" y="6.6" width="1.6" height="1.6" fill="#262626"/><rect x="3.6" y="4.2" width="1.6" height="1.6" fill="#262626"/><rect x="3.6" y="6.6" width="1.6" height="1.6" fill="#262626"/><rect x="6.2" y="4.2" width="1.6" height="1.6" fill="#262626"/><rect x="6.2" y="6.6" width="1.6" height="1.6" fill="#262626"/><rect x="8.8" y="4.2" width="1.6" height="1.6" fill="#262626"/><rect x="8.8" y="6.6" width="1.6" height="1.6" fill="#262626"/></svg>
<div class="r" style="left:1111.0px;top:614.5px;width:197.0px;height:1.0px;background:#3b3b3b;"></div>
<svg class="i" style="left:1122.0px;top:622.5px;" width="8" height="8" viewBox="0 0 8 8"><path d="M1.6 .8 V7.2 L7 4 Z" fill="#b0b0b0"/></svg>
<span class="t" style="left:1136.2px;top:619.3px;font-size:12.00px;color:#dcdcdc;letter-spacing:0.16px;">Collections</span>
<svg class="i" style="left:1288.2px;top:621.5px;" width="12" height="12" viewBox="0 0 12 12"><rect x="1" y="4.2" width="1.6" height="1.6" fill="#262626"/><rect x="1" y="6.6" width="1.6" height="1.6" fill="#262626"/><rect x="3.6" y="4.2" width="1.6" height="1.6" fill="#262626"/><rect x="3.6" y="6.6" width="1.6" height="1.6" fill="#262626"/><rect x="6.2" y="4.2" width="1.6" height="1.6" fill="#262626"/><rect x="6.2" y="6.6" width="1.6" height="1.6" fill="#262626"/><rect x="8.8" y="4.2" width="1.6" height="1.6" fill="#262626"/><rect x="8.8" y="6.6" width="1.6" height="1.6" fill="#262626"/></svg>
<div class="r" style="left:1111.0px;top:638.6px;width:197.0px;height:1.0px;background:#3b3b3b;"></div>
<svg class="i" style="left:1122.0px;top:646.6px;" width="8" height="8" viewBox="0 0 8 8"><path d="M1.6 .8 V7.2 L7 4 Z" fill="#b0b0b0"/></svg>
<span class="t" style="left:1136.2px;top:643.4px;font-size:12.00px;color:#dcdcdc;letter-spacing:0.21px;">Instancing</span>
<svg class="i" style="left:1288.2px;top:645.6px;" width="12" height="12" viewBox="0 0 12 12"><rect x="1" y="4.2" width="1.6" height="1.6" fill="#262626"/><rect x="1" y="6.6" width="1.6" height="1.6" fill="#262626"/><rect x="3.6" y="4.2" width="1.6" height="1.6" fill="#262626"/><rect x="3.6" y="6.6" width="1.6" height="1.6" fill="#262626"/><rect x="6.2" y="4.2" width="1.6" height="1.6" fill="#262626"/><rect x="6.2" y="6.6" width="1.6" height="1.6" fill="#262626"/><rect x="8.8" y="4.2" width="1.6" height="1.6" fill="#262626"/><rect x="8.8" y="6.6" width="1.6" height="1.6" fill="#262626"/></svg>
<div class="r" style="left:1.0px;top:625.0px;width:1079.0px;height:44.6px;background:#2b2b2b;border-radius:5px;"></div>
<div class="r" style="left:1.0px;top:625.0px;width:1079.0px;height:25.0px;background:#3b3b3b;border-radius:5px 5px 0 0;"></div>
<div class="r" style="left:8.6px;top:628.7px;width:31.0px;height:18.6px;background:#2b2b2b;border-radius:4px;border:1px solid #464646;"></div>
<svg class="i" style="left:12.0px;top:630.0px;" width="16" height="16" viewBox="0 0 16 16"><circle cx="8" cy="8" r="6.5" fill="none" stroke="#e0e0e0" stroke-width="1.1"/><path d="M9.2 4.8 L7 8.2 L8.6 10.4" stroke="#e0e0e0" stroke-width="1.1" fill="none" stroke-linejoin="round"/></svg>
<svg class="i" style="left:27.0px;top:635.2px" width="12" height="8" viewBox="-6 -4 12 8"><path d="M-2.9 -1.5 L0 1.8 L2.9 -1.5" fill="none" stroke="#c2c2c2" stroke-width="1.15" stroke-linecap="round" stroke-linejoin="round"/></svg>
<div class="r" style="left:45.6px;top:628.7px;width:68.8px;height:18.6px;background:#2b2b2b;border-radius:4px 0 0 4px;border:1px solid #464646;"></div>
<span class="t" style="left:53.5px;top:631.0px;font-size:11.50px;color:#dcdcdc;letter-spacing:-0.27px;">Playback</span>
<svg class="i" style="left:102.0px;top:635.2px" width="12" height="8" viewBox="-6 -4 12 8"><path d="M-2.9 -1.5 L0 1.8 L2.9 -1.5" fill="none" stroke="#c2c2c2" stroke-width="1.15" stroke-linecap="round" stroke-linejoin="round"/></svg>
<div class="r" style="left:114.4px;top:628.7px;width:58.9px;height:18.6px;background:#2b2b2b;border-radius:0 4px 4px 0;border:1px solid #464646;border-left:none;"></div>
<span class="t" style="left:122.4px;top:631.0px;font-size:11.50px;color:#dcdcdc;letter-spacing:-0.13px;">Keying</span>
<svg class="i" style="left:161.0px;top:635.2px" width="12" height="8" viewBox="-6 -4 12 8"><path d="M-2.9 -1.5 L0 1.8 L2.9 -1.5" fill="none" stroke="#c2c2c2" stroke-width="1.15" stroke-linecap="round" stroke-linejoin="round"/></svg>
<span class="t" style="left:189.3px;top:631.0px;font-size:11.50px;color:#dcdcdc;letter-spacing:-0.13px;">View</span>
<span class="t" style="left:229.3px;top:631.0px;font-size:11.50px;color:#dcdcdc;letter-spacing:-0.08px;">Marker</span>
<div class="r" style="left:458.2px;top:629.1px;width:17.7px;height:17.8px;background:#595959;border-radius:4px;"></div>
<svg class="i" style="left:459.0px;top:630.0px;" width="16" height="16" viewBox="0 0 16 16"><circle cx="8" cy="8" r="3.3" fill="#dcdcdc"/></svg>
<div class="r" style="left:483.0px;top:629.1px;width:18.5px;height:17.8px;background:#595959;border-radius:4px 0 0 4px;"></div>
<svg class="i" style="left:484.2px;top:630.0px;" width="16" height="16" viewBox="0 0 16 16"><rect x="3" y="3.6" width="1.8" height="8.8" fill="#e6e6e6"/><path d="M12.4 3.6 V12.4 L5.4 8 Z" fill="#e6e6e6"/></svg>
<div class="r" style="left:502.5px;top:629.1px;width:18.0px;height:17.8px;background:#595959;border-radius:0px;"></div>
<svg class="i" style="left:503.4px;top:630.0px;" width="16" height="16" viewBox="0 0 16 16"><path d="M8 4.2 V11.8 L2 8 Z M14 4.2 V11.8 L8 8 Z" fill="#e6e6e6"/></svg>
<div class="r" style="left:521.5px;top:629.1px;width:20.0px;height:17.8px;background:#595959;border-radius:0px;"></div>
<svg class="i" style="left:523.5px;top:630.0px;" width="16" height="16" viewBox="0 0 16 16"><path d="M12.2 2.6 V13.4 L3.4 8 Z" fill="#e6e6e6"/></svg>
<div class="r" style="left:542.5px;top:629.1px;width:19.0px;height:17.8px;background:#595959;border-radius:0px;"></div>
<svg class="i" style="left:543.5px;top:630.0px;" width="16" height="16" viewBox="0 0 16 16"><path d="M3.8 2.6 V13.4 L12.6 8 Z" fill="#e6e6e6"/></svg>
<div class="r" style="left:562.5px;top:629.1px;width:18.0px;height:17.8px;background:#595959;border-radius:0px;"></div>
<svg class="i" style="left:563.4px;top:630.0px;" width="16" height="16" viewBox="0 0 16 16"><path d="M2 4.2 V11.8 L8 8 Z M8 4.2 V11.8 L14 8 Z" fill="#e6e6e6"/></svg>
<div class="r" style="left:581.5px;top:629.1px;width:19.5px;height:17.8px;background:#595959;border-radius:0 4px 4px 0;"></div>
<svg class="i" style="left:583.1px;top:630.0px;" width="16" height="16" viewBox="0 0 16 16"><rect x="11.2" y="3.6" width="1.8" height="8.8" fill="#e6e6e6"/><path d="M3.6 3.6 V12.4 L10.6 8 Z" fill="#e6e6e6"/></svg>
<div class="r" style="left:782.7px;top:628.8px;width:81.4px;height:18.2px;background:#595959;border-radius:4px;"></div>
<span class="t" style="left:819.1px;top:631.0px;font-size:11.50px;color:#dcdcdc;">1</span>
<div class="r" style="left:870.9px;top:628.8px;width:18.3px;height:18.2px;background:#595959;border-radius:4px 0 0 4px;"></div>
<svg class="i" style="left:872.0px;top:629.6px;" width="16" height="16" viewBox="0 0 16 16"><circle cx="7.6" cy="9" r="5.2" fill="none" stroke="#e0e0e0" stroke-width="1.2"/><path d="M7.6 5.8 V9 H10 M5.8 1.8 H9.4 M7.6 1.8 V3.8 M12 3.4 L13.6 2" stroke="#e0e0e0" stroke-width="1.1" fill="none"/></svg>
<div class="r" style="left:889.9px;top:628.8px;width:87.0px;height:18.2px;background:#595959;border-radius:0px;"></div>
<span class="t" style="left:905.5px;top:631.0px;font-size:11.50px;color:#dcdcdc;letter-spacing:-0.13px;">Start:</span>
<span class="t" style="left:955.2px;top:631.0px;font-size:11.50px;color:#dcdcdc;">1</span>
<div class="r" style="left:977.6px;top:628.8px;width:83.6px;height:18.2px;background:#595959;border-radius:0 4px 4px 0;"></div>
<span class="t" style="left:993.2px;top:631.0px;font-size:11.50px;color:#dcdcdc;letter-spacing:-0.89px;">End:</span>
<span class="t" style="left:1025.2px;top:631.0px;font-size:11.50px;color:#dcdcdc;letter-spacing:0.40px;">250</span>
<div class="r" style="left:1.0px;top:650.0px;width:1079.0px;height:6.0px;background:#3b3b3b;"></div>
<div class="r" style="left:1.5px;top:650.0px;width:1038.8px;height:6.0px;background:#444444;border-radius:5px 0 0 0;"></div>
<div class="r" style="left:1.5px;top:650.3px;width:1038.8px;height:1.2px;background:#161616;"></div>
<div class="r" style="left:16.4px;top:651.5px;width:1.0px;height:4.5px;background:#383838;"></div>
<div class="r" style="left:36.4px;top:651.5px;width:1.0px;height:4.5px;background:#383838;"></div>
<div class="r" style="left:56.4px;top:651.5px;width:1.0px;height:4.5px;background:#383838;"></div>
<div class="r" style="left:76.4px;top:651.5px;width:1.0px;height:4.5px;background:#383838;"></div>
<div class="r" style="left:96.4px;top:651.5px;width:1.0px;height:4.5px;background:#383838;"></div>
<div class="r" style="left:116.4px;top:651.5px;width:1.0px;height:4.5px;background:#383838;"></div>
<div class="r" style="left:136.4px;top:651.5px;width:1.0px;height:4.5px;background:#383838;"></div>
<div class="r" style="left:156.4px;top:651.5px;width:1.0px;height:4.5px;background:#383838;"></div>
<div class="r" style="left:176.4px;top:651.5px;width:1.0px;height:4.5px;background:#383838;"></div>
<div class="r" style="left:196.4px;top:651.5px;width:1.0px;height:4.5px;background:#383838;"></div>
<div class="r" style="left:216.4px;top:651.5px;width:1.0px;height:4.5px;background:#383838;"></div>
<div class="r" style="left:236.4px;top:651.5px;width:1.0px;height:4.5px;background:#383838;"></div>
<div class="r" style="left:256.4px;top:651.5px;width:1.0px;height:4.5px;background:#383838;"></div>
<div class="r" style="left:276.4px;top:651.5px;width:1.0px;height:4.5px;background:#383838;"></div>
<div class="r" style="left:296.4px;top:651.5px;width:1.0px;height:4.5px;background:#383838;"></div>
<div class="r" style="left:316.4px;top:651.5px;width:1.0px;height:4.5px;background:#383838;"></div>
<div class="r" style="left:336.4px;top:651.5px;width:1.0px;height:4.5px;background:#383838;"></div>
<div class="r" style="left:356.4px;top:651.5px;width:1.0px;height:4.5px;background:#383838;"></div>
<div class="r" style="left:376.4px;top:651.5px;width:1.0px;height:4.5px;background:#383838;"></div>
<div class="r" style="left:396.4px;top:651.5px;width:1.0px;height:4.5px;background:#383838;"></div>
<div class="r" style="left:416.4px;top:651.5px;width:1.0px;height:4.5px;background:#383838;"></div>
<div class="r" style="left:436.4px;top:651.5px;width:1.0px;height:4.5px;background:#383838;"></div>
<div class="r" style="left:456.4px;top:651.5px;width:1.0px;height:4.5px;background:#383838;"></div>
<div class="r" style="left:476.4px;top:651.5px;width:1.0px;height:4.5px;background:#383838;"></div>
<div class="r" style="left:496.4px;top:651.5px;width:1.0px;height:4.5px;background:#383838;"></div>
<div class="r" style="left:516.4px;top:651.5px;width:1.0px;height:4.5px;background:#383838;"></div>
<div class="r" style="left:536.4px;top:651.5px;width:1.0px;height:4.5px;background:#383838;"></div>
<div class="r" style="left:556.4px;top:651.5px;width:1.0px;height:4.5px;background:#383838;"></div>
<div class="r" style="left:576.4px;top:651.5px;width:1.0px;height:4.5px;background:#383838;"></div>
<div class="r" style="left:596.4px;top:651.5px;width:1.0px;height:4.5px;background:#383838;"></div>
<div class="r" style="left:616.4px;top:651.5px;width:1.0px;height:4.5px;background:#383838;"></div>
<div class="r" style="left:636.4px;top:651.5px;width:1.0px;height:4.5px;background:#383838;"></div>
<div class="r" style="left:656.4px;top:651.5px;width:1.0px;height:4.5px;background:#383838;"></div>
<div class="r" style="left:676.4px;top:651.5px;width:1.0px;height:4.5px;background:#383838;"></div>
<div class="r" style="left:696.4px;top:651.5px;width:1.0px;height:4.5px;background:#383838;"></div>
<div class="r" style="left:716.4px;top:651.5px;width:1.0px;height:4.5px;background:#383838;"></div>
<div class="r" style="left:736.4px;top:651.5px;width:1.0px;height:4.5px;background:#383838;"></div>
<div class="r" style="left:756.4px;top:651.5px;width:1.0px;height:4.5px;background:#383838;"></div>
<div class="r" style="left:776.4px;top:651.5px;width:1.0px;height:4.5px;background:#383838;"></div>
<div class="r" style="left:796.4px;top:651.5px;width:1.0px;height:4.5px;background:#383838;"></div>
<div class="r" style="left:816.4px;top:651.5px;width:1.0px;height:4.5px;background:#383838;"></div>
<div class="r" style="left:836.4px;top:651.5px;width:1.0px;height:4.5px;background:#383838;"></div>
<div class="r" style="left:856.4px;top:651.5px;width:1.0px;height:4.5px;background:#383838;"></div>
<div class="r" style="left:876.4px;top:651.5px;width:1.0px;height:4.5px;background:#383838;"></div>
<div class="r" style="left:896.4px;top:651.5px;width:1.0px;height:4.5px;background:#383838;"></div>
<div class="r" style="left:916.4px;top:651.5px;width:1.0px;height:4.5px;background:#383838;"></div>
<div class="r" style="left:936.4px;top:651.5px;width:1.0px;height:4.5px;background:#383838;"></div>
<div class="r" style="left:956.4px;top:651.5px;width:1.0px;height:4.5px;background:#383838;"></div>
<div class="r" style="left:976.4px;top:651.5px;width:1.0px;height:4.5px;background:#383838;"></div>
<div class="r" style="left:996.4px;top:651.5px;width:1.0px;height:4.5px;background:#383838;"></div>
<div class="r" style="left:1016.4px;top:651.5px;width:1.0px;height:4.5px;background:#383838;"></div>
<div class="r" style="left:1036.4px;top:651.5px;width:1.0px;height:4.5px;background:#383838;"></div>
<div class="r" style="left:1056.4px;top:651.5px;width:1.0px;height:4.5px;background:#383838;"></div>
<div class="r" style="left:2.6px;top:655.6px;width:1075.4px;height:12.4px;background:#636363;border-radius:6.2px;"></div>
<div class="r" style="left:2.8px;top:657.2px;width:9.6px;height:9.6px;border-radius:50%;background:#555;border:1.4px solid #3e3e3e"></div>
<div class="r" style="left:1067.8px;top:657.2px;width:9.6px;height:9.6px;border-radius:50%;background:#555;border:1.4px solid #3e3e3e"></div>
<span class="t" style="left:71.0px;top:654.8px;font-size:12.00px;color:#000000;letter-spacing:-0.47px;">10</span>
<span class="t" style="left:111.0px;top:654.8px;font-size:12.00px;color:#000000;letter-spacing:-0.47px;">20</span>
<span class="t" style="left:151.0px;top:654.8px;font-size:12.00px;color:#000000;letter-spacing:-0.47px;">30</span>
<span class="t" style="left:191.0px;top:654.8px;font-size:12.00px;color:#000000;letter-spacing:-0.47px;">40</span>
<span class="t" style="left:231.0px;top:654.8px;font-size:12.00px;color:#000000;letter-spacing:-0.47px;">50</span>
<span class="t" style="left:271.0px;top:654.8px;font-size:12.00px;color:#000000;letter-spacing:-0.47px;">60</span>
<span class="t" style="left:311.0px;top:654.8px;font-size:12.00px;color:#000000;letter-spacing:-0.47px;">70</span>
<span class="t" style="left:351.0px;top:654.8px;font-size:12.00px;color:#000000;letter-spacing:-0.47px;">80</span>
<span class="t" style="left:391.0px;top:654.8px;font-size:12.00px;color:#000000;letter-spacing:-0.47px;">90</span>
<span class="t" style="left:427.5px;top:654.8px;font-size:12.00px;color:#000000;letter-spacing:-0.21px;">100</span>
<span class="t" style="left:467.5px;top:654.8px;font-size:12.00px;color:#000000;letter-spacing:0.09px;">110</span>
<span class="t" style="left:507.5px;top:654.8px;font-size:12.00px;color:#000000;letter-spacing:-0.21px;">120</span>
<span class="t" style="left:547.5px;top:654.8px;font-size:12.00px;color:#000000;letter-spacing:-0.21px;">130</span>
<span class="t" style="left:587.5px;top:654.8px;font-size:12.00px;color:#000000;letter-spacing:-0.21px;">140</span>
<span class="t" style="left:627.5px;top:654.8px;font-size:12.00px;color:#000000;letter-spacing:-0.21px;">150</span>
<span class="t" style="left:667.5px;top:654.8px;font-size:12.00px;color:#000000;letter-spacing:-0.21px;">160</span>
<span class="t" style="left:707.5px;top:654.8px;font-size:12.00px;color:#000000;letter-spacing:-0.21px;">170</span>
<span class="t" style="left:747.5px;top:654.8px;font-size:12.00px;color:#000000;letter-spacing:-0.21px;">180</span>
<span class="t" style="left:787.5px;top:654.8px;font-size:12.00px;color:#000000;letter-spacing:-0.21px;">190</span>
<span class="t" style="left:827.5px;top:654.8px;font-size:12.00px;color:#000000;letter-spacing:-0.21px;">200</span>
<span class="t" style="left:867.5px;top:654.8px;font-size:12.00px;color:#000000;letter-spacing:-0.21px;">210</span>
<span class="t" style="left:907.5px;top:654.8px;font-size:12.00px;color:#000000;letter-spacing:-0.21px;">220</span>
<span class="t" style="left:947.5px;top:654.8px;font-size:12.00px;color:#000000;letter-spacing:-0.21px;">230</span>
<span class="t" style="left:987.5px;top:654.8px;font-size:12.00px;color:#000000;letter-spacing:-0.21px;">240</span>
<span class="t" style="left:1027.5px;top:654.8px;font-size:12.00px;color:#000000;letter-spacing:-0.21px;">250</span>
<div class="r" style="left:39.5px;top:650.0px;width:1.4px;height:6.0px;background:#5680c2;"></div>
<div class="r" style="left:32.1px;top:654.8px;width:16.7px;height:14.2px;background:#5680c2;border-radius:3px;"></div>
<span class="t" style="left:37.2px;top:655.0px;font-size:11.50px;color:#ffffff;">1</span>
<div class="r" style="left:0.0px;top:670.6px;width:1309.0px;height:20.4px;background:#2f2f2f;"></div>
<svg class="i" style="left:9.2px;top:671.9px;" width="18" height="18" viewBox="0 0 18 18"><rect x="1" y="1" width="16" height="16" rx="3.4" fill="none" stroke="#b8b8b8" stroke-width="1.2"/><path d="M4.4 6 H7 L10.6 12 H13.6 M10.4 6 H13.6" fill="none" stroke="#b8b8b8" stroke-width="1.2"/></svg>
<span class="t" style="left:34.2px;top:673.8px;font-size:11.50px;color:#a8a8a8;letter-spacing:-0.40px;">Axis Snap</span>
<span class="t" style="left:818.5px;top:673.8px;font-size:11.50px;color:#b4b4b4;letter-spacing:-0.05px;">Collection | Cube | Verts:296 | Faces:294 | Tris:588 | Objects:1/3 | Mem: 25.1 MB | v2.80.35</span>
</div>
</body></html>
